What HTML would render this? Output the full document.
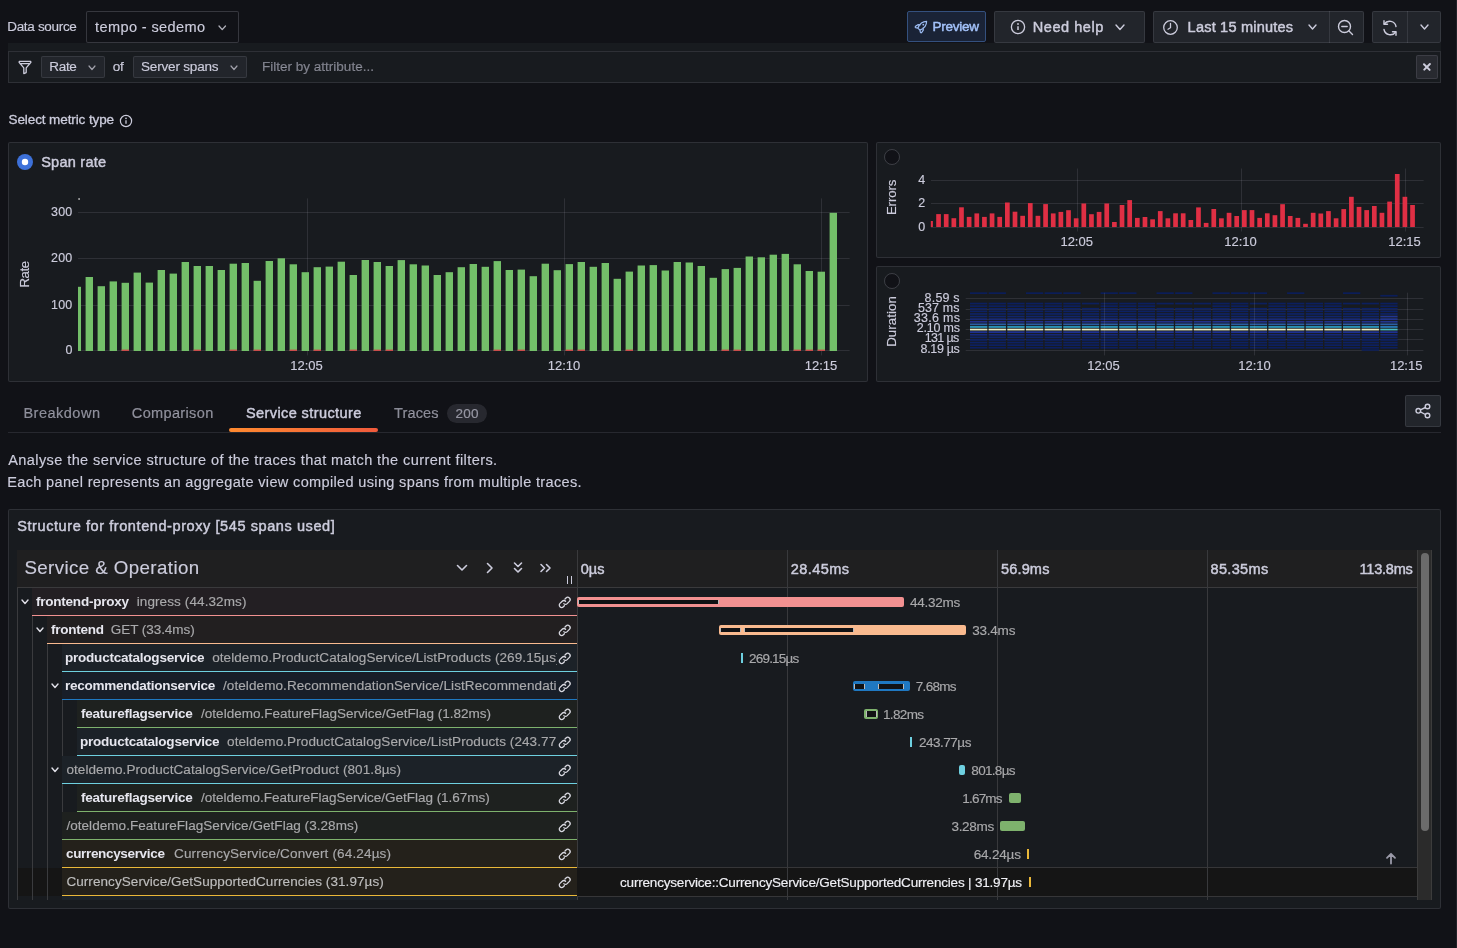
<!DOCTYPE html>
<html><head><meta charset="utf-8"><style>
html,body{margin:0;padding:0;width:1457px;height:948px;overflow:hidden;background:#111217;font-family:"Liberation Sans",sans-serif;}
div{box-sizing:border-box;}
svg{position:absolute;overflow:visible}
</style></head><body>
<div style="position:absolute;left:0;top:0;width:1457px;height:948px;will-change:transform">
<div style="position:absolute;left:7.20px;top:19.00px;font-size:13.52px;line-height:15.10px;font-weight:400;color:#ccccdc;letter-spacing:-0.320px;white-space:pre;-webkit-text-stroke:0.15px #ccccdc;">Data source</div>
<div style="position:absolute;left:86px;top:11px;width:152.5px;height:32px;border:1px solid rgba(204,204,220,0.2);border-radius:2px;background:#111217"></div>
<div style="position:absolute;left:95.00px;top:19.00px;font-size:14.56px;line-height:16.26px;font-weight:400;color:#ccccdc;letter-spacing:0.385px;white-space:pre;-webkit-text-stroke:0.15px #ccccdc;">tempo - sedemo</div>
<svg style="left:217.95px;top:25.0px" width="8.5" height="5.6" viewBox="0 0 8.5 5.6" ><path d="M1 1 L4.25 4.6 L7.5 1" fill="none" stroke="#b0b0ba" stroke-width="1.3" stroke-linecap="round" stroke-linejoin="round"/></svg>
<div style="position:absolute;left:907px;top:11px;width:79px;height:31px;border:1px solid #34507e;border-radius:2px;background:#1a2336"></div>
<svg style="left:913.3px;top:18.5px" width="16" height="16" viewBox="0 0 16 16" ><path d="M13.6 2.4 C9.6 2.4 6.6 4.9 4.9 9.1 L6.9 11.1 C11.1 9.4 13.6 6.4 13.6 2.4 Z M4.9 9.1 L2.6 8.6 C2.1 8.4 2.1 7.7 2.5 7.3 L4.9 5.7 L7.1 5.9 M6.9 11.1 L7.4 13.4 C7.6 13.9 8.3 13.9 8.7 13.5 L10.3 11.1 L10.1 8.9" fill="none" stroke="#9dbdf5" stroke-width="1.2" stroke-linejoin="round" stroke-linecap="round"/><circle cx="10.3" cy="5.7" r="0.9" fill="#9dbdf5"/></svg>
<div style="position:absolute;left:932.50px;top:19.00px;font-size:13.52px;line-height:15.10px;font-weight:400;color:#a3c2fa;letter-spacing:-0.250px;white-space:pre;-webkit-text-stroke:0.45px #a3c2fa;">Preview</div>
<div style="position:absolute;left:994px;top:11px;width:151px;height:32px;border:1px solid rgba(204,204,220,0.12);border-radius:2px;background:#22252b"></div>
<svg style="left:1010px;top:19px" width="16" height="16" viewBox="0 0 16 16" ><circle cx="8" cy="8" r="6.6" fill="none" stroke="#ccccdc" stroke-width="1.3"/><path d="M8 7.2 V11" stroke="#ccccdc" stroke-width="1.5"/><circle cx="8" cy="5" r="0.9" fill="#ccccdc"/></svg>
<div style="position:absolute;left:1032.80px;top:19.00px;font-size:14.56px;line-height:16.26px;font-weight:400;color:#ccccdc;letter-spacing:0.525px;white-space:pre;-webkit-text-stroke:0.45px #ccccdc;">Need help</div>
<svg style="left:1115.0px;top:24.25px" width="10" height="6.5" viewBox="0 0 10 6.5" ><path d="M1 1 L5.0 5.5 L9 1" fill="none" stroke="#ccccdc" stroke-width="1.4" stroke-linecap="round" stroke-linejoin="round"/></svg>
<div style="position:absolute;left:1153px;top:11px;width:211px;height:32px;border:1px solid rgba(204,204,220,0.12);border-radius:2px;background:#22252b"></div>
<div style="position:absolute;left:1328.5px;top:11px;width:1px;height:32px;background:rgba(204,204,220,0.12)"></div>
<svg style="left:1162px;top:19px" width="17" height="17" viewBox="0 0 17 17" ><circle cx="8.5" cy="8.5" r="6.8" fill="none" stroke="#ccccdc" stroke-width="1.3"/><path d="M8.5 4.5 V8.7 L6 10.2" fill="none" stroke="#ccccdc" stroke-width="1.3" stroke-linecap="round"/></svg>
<div style="position:absolute;left:1187.60px;top:19.00px;font-size:14.56px;line-height:16.26px;font-weight:400;color:#ccccdc;letter-spacing:0.193px;white-space:pre;-webkit-text-stroke:0.45px #ccccdc;">Last 15 minutes</div>
<svg style="left:1307.5px;top:24.0px" width="9" height="6" viewBox="0 0 9 6" ><path d="M1 1 L4.5 5 L8 1" fill="none" stroke="#ccccdc" stroke-width="1.4" stroke-linecap="round" stroke-linejoin="round"/></svg>
<svg style="left:1337px;top:19px" width="18" height="18" viewBox="0 0 18 18" ><circle cx="7.5" cy="7.5" r="6" fill="none" stroke="#ccccdc" stroke-width="1.4"/><path d="M4.8 7.5 H10.2 M12 12 L15.5 15.5" stroke="#ccccdc" stroke-width="1.4" stroke-linecap="round"/></svg>
<div style="position:absolute;left:1372px;top:11px;width:69px;height:32px;border:1px solid rgba(204,204,220,0.12);border-radius:2px;background:#22252b"></div>
<div style="position:absolute;left:1407px;top:11px;width:1px;height:32px;background:rgba(204,204,220,0.12)"></div>
<svg style="left:1381px;top:19px" width="18" height="18" viewBox="0 0 18 18" ><path d="M15 7.5 A6.5 6.5 0 0 0 3.3 5 M3 10.5 A6.5 6.5 0 0 0 14.7 13" fill="none" stroke="#ccccdc" stroke-width="1.4" stroke-linecap="round"/><path d="M3 1.8 V5.3 H6.5 M15 16.2 V12.7 H11.5" fill="none" stroke="#ccccdc" stroke-width="1.4" stroke-linecap="round" stroke-linejoin="round"/></svg>
<svg style="left:1419.5px;top:24.0px" width="9" height="6" viewBox="0 0 9 6" ><path d="M1 1 L4.5 5 L8 1" fill="none" stroke="#ccccdc" stroke-width="1.4" stroke-linecap="round" stroke-linejoin="round"/></svg>
<div style="position:absolute;left:8px;top:43px;width:1433px;height:40px;background:#181b1f"></div>
<div style="position:absolute;left:8px;top:51px;width:1433px;height:32px;border:1px solid rgba(204,204,220,0.12);background:#181b1f"></div>
<svg style="left:17px;top:59px" width="16" height="16" viewBox="0 0 16 16" ><path d="M2.3 2.4 H13.7 L13.9 3.3 L9.2 8.8 V13.6 L6.8 14.6 V8.8 L2.1 3.3 Z M2.6 4.6 H13.4" fill="none" stroke="#ccccdc" stroke-width="1.3" stroke-linejoin="round"/></svg>
<div style="position:absolute;left:41px;top:56px;width:64px;height:22px;border:1px solid rgba(204,204,220,0.12);border-radius:2px;background:#22252b"></div>
<div style="position:absolute;left:49.30px;top:59.00px;font-size:13.52px;line-height:15.10px;font-weight:400;color:#ccccdc;letter-spacing:-0.333px;white-space:pre;-webkit-text-stroke:0.15px #ccccdc;">Rate</div>
<svg style="left:88.2px;top:65.05px" width="8" height="5.5" viewBox="0 0 8 5.5" ><path d="M1 1 L4.0 4.5 L7 1" fill="none" stroke="#a0a0aa" stroke-width="1.2" stroke-linecap="round" stroke-linejoin="round"/></svg>
<div style="position:absolute;left:112.70px;top:59.00px;font-size:13.52px;line-height:15.10px;font-weight:400;color:#ccccdc;letter-spacing:-0.300px;white-space:pre;-webkit-text-stroke:0.15px #ccccdc;">of</div>
<div style="position:absolute;left:133px;top:56px;width:113.5px;height:22px;border:1px solid rgba(204,204,220,0.12);border-radius:2px;background:#22252b"></div>
<div style="position:absolute;left:141.00px;top:59.00px;font-size:13.52px;line-height:15.10px;font-weight:400;color:#ccccdc;letter-spacing:-0.182px;white-space:pre;-webkit-text-stroke:0.15px #ccccdc;">Server spans</div>
<svg style="left:229.5px;top:65.05px" width="8" height="5.5" viewBox="0 0 8 5.5" ><path d="M1 1 L4.0 4.5 L7 1" fill="none" stroke="#a0a0aa" stroke-width="1.2" stroke-linecap="round" stroke-linejoin="round"/></svg>
<div style="position:absolute;left:262.00px;top:59.00px;font-size:13.52px;line-height:15.10px;font-weight:400;color:rgba(204,204,220,0.55);letter-spacing:0.000px;white-space:pre;-webkit-text-stroke:0.15px rgba(204,204,220,0.55);">Filter by attribute...</div>
<div style="position:absolute;left:1416px;top:55px;width:22px;height:24px;border:1px solid rgba(204,204,220,0.12);border-radius:2px;background:#282a30"></div>
<div style="position:absolute;left:1422.2px;top:66.4px;width:9.6px;height:1.6px;background:#ccccdc;transform:rotate(45deg);border-radius:1px"></div>
<div style="position:absolute;left:1422.2px;top:66.4px;width:9.6px;height:1.6px;background:#ccccdc;transform:rotate(-45deg);border-radius:1px"></div>
<div style="position:absolute;left:8.50px;top:112.00px;font-size:13.52px;line-height:15.10px;font-weight:400;color:#ccccdc;letter-spacing:-0.106px;white-space:pre;-webkit-text-stroke:0.3px #ccccdc;">Select metric type</div>
<svg style="left:119px;top:114px" width="14" height="14" viewBox="0 0 14 14" ><circle cx="7" cy="7" r="5.6" fill="none" stroke="#ccccdc" stroke-width="1.2"/><path d="M7 6.3 V9.8" stroke="#ccccdc" stroke-width="1.3"/><circle cx="7" cy="4.4" r="0.8" fill="#ccccdc"/></svg>
<div style="position:absolute;left:8px;top:142px;width:860px;height:240px;border:1px solid rgba(204,204,220,0.12);border-radius:2px;background:#181b1f"></div>
<svg style="left:16px;top:153px" width="18" height="18" viewBox="0 0 18 18" ><circle cx="9" cy="9" r="8" fill="#3d71d9"/><circle cx="9" cy="9" r="3.2" fill="#fff"/></svg>
<div style="position:absolute;left:41.20px;top:154.00px;font-size:14.56px;line-height:16.26px;font-weight:400;color:#ccccdc;letter-spacing:0.225px;white-space:pre;-webkit-text-stroke:0.45px #ccccdc;">Span rate</div>
<svg style="left:0;top:0" width="1457" height="948"><rect x="78" y="212" width="771.6" height="1" fill="rgba(204,204,220,0.12)"/><rect x="78" y="258" width="771.6" height="1" fill="rgba(204,204,220,0.12)"/><rect x="78" y="305" width="771.6" height="1" fill="rgba(204,204,220,0.12)"/><rect x="78" y="350" width="771.6" height="1" fill="rgba(204,204,220,0.12)"/><rect x="307" y="198.4" width="1" height="157" fill="rgba(204,204,220,0.12)"/><rect x="564" y="198.4" width="1" height="157" fill="rgba(204,204,220,0.12)"/><rect x="821" y="198.4" width="1" height="157" fill="rgba(204,204,220,0.12)"/><rect x="78.3" y="198.2" width="1.6" height="1.6" fill="#bbb"/><rect x="78.00" y="286.80" width="3" height="64.20" fill="#73BF69"/><rect x="85.60" y="277.00" width="7.4" height="74.00" fill="#73BF69"/><rect x="97.60" y="286.20" width="7.4" height="64.80" fill="#73BF69"/><rect x="109.60" y="281.40" width="7.4" height="69.60" fill="#73BF69"/><rect x="121.60" y="282.80" width="7.4" height="68.20" fill="#73BF69"/><rect x="121.60" y="349.6" width="7.4" height="1.4" fill="#E02F44" opacity="0.8"/><rect x="133.60" y="272.60" width="7.4" height="78.40" fill="#73BF69"/><rect x="145.60" y="282.60" width="7.4" height="68.40" fill="#73BF69"/><rect x="157.60" y="270.00" width="7.4" height="81.00" fill="#73BF69"/><rect x="169.60" y="273.60" width="7.4" height="77.40" fill="#73BF69"/><rect x="181.60" y="262.00" width="7.4" height="89.00" fill="#73BF69"/><rect x="193.60" y="266.00" width="7.4" height="85.00" fill="#73BF69"/><rect x="193.60" y="349.6" width="7.4" height="1.4" fill="#E02F44" opacity="0.8"/><rect x="205.60" y="266.00" width="7.4" height="85.00" fill="#73BF69"/><rect x="217.60" y="270.00" width="7.4" height="81.00" fill="#73BF69"/><rect x="229.60" y="263.70" width="7.4" height="87.30" fill="#73BF69"/><rect x="229.60" y="349.6" width="7.4" height="1.4" fill="#E02F44" opacity="0.8"/><rect x="241.60" y="263.00" width="7.4" height="88.00" fill="#73BF69"/><rect x="253.60" y="280.80" width="7.4" height="70.20" fill="#73BF69"/><rect x="253.60" y="349.6" width="7.4" height="1.4" fill="#E02F44" opacity="0.8"/><rect x="265.60" y="261.00" width="7.4" height="90.00" fill="#73BF69"/><rect x="277.60" y="258.30" width="7.4" height="92.70" fill="#73BF69"/><rect x="289.60" y="264.30" width="7.4" height="86.70" fill="#73BF69"/><rect x="289.60" y="349.6" width="7.4" height="1.4" fill="#E02F44" opacity="0.8"/><rect x="301.60" y="272.20" width="7.4" height="78.80" fill="#73BF69"/><rect x="313.60" y="267.20" width="7.4" height="83.80" fill="#73BF69"/><rect x="313.60" y="349.6" width="7.4" height="1.4" fill="#E02F44" opacity="0.8"/><rect x="325.60" y="266.60" width="7.4" height="84.40" fill="#73BF69"/><rect x="337.60" y="261.70" width="7.4" height="89.30" fill="#73BF69"/><rect x="349.60" y="275.00" width="7.4" height="76.00" fill="#73BF69"/><rect x="349.60" y="349.6" width="7.4" height="1.4" fill="#E02F44" opacity="0.8"/><rect x="361.60" y="260.00" width="7.4" height="91.00" fill="#73BF69"/><rect x="373.60" y="262.00" width="7.4" height="89.00" fill="#73BF69"/><rect x="373.60" y="349.6" width="7.4" height="1.4" fill="#E02F44" opacity="0.8"/><rect x="385.60" y="266.00" width="7.4" height="85.00" fill="#73BF69"/><rect x="385.60" y="349.6" width="7.4" height="1.4" fill="#E02F44" opacity="0.8"/><rect x="397.60" y="260.10" width="7.4" height="90.90" fill="#73BF69"/><rect x="409.60" y="264.30" width="7.4" height="86.70" fill="#73BF69"/><rect x="421.60" y="265.50" width="7.4" height="85.50" fill="#73BF69"/><rect x="433.60" y="275.00" width="7.4" height="76.00" fill="#73BF69"/><rect x="445.60" y="272.20" width="7.4" height="78.80" fill="#73BF69"/><rect x="457.60" y="267.20" width="7.4" height="83.80" fill="#73BF69"/><rect x="469.60" y="264.00" width="7.4" height="87.00" fill="#73BF69"/><rect x="481.60" y="266.80" width="7.4" height="84.20" fill="#73BF69"/><rect x="493.60" y="261.10" width="7.4" height="89.90" fill="#73BF69"/><rect x="493.60" y="349.6" width="7.4" height="1.4" fill="#E02F44" opacity="0.8"/><rect x="505.60" y="270.00" width="7.4" height="81.00" fill="#73BF69"/><rect x="517.60" y="269.60" width="7.4" height="81.40" fill="#73BF69"/><rect x="517.60" y="349.6" width="7.4" height="1.4" fill="#E02F44" opacity="0.8"/><rect x="529.60" y="276.20" width="7.4" height="74.80" fill="#73BF69"/><rect x="541.60" y="263.70" width="7.4" height="87.30" fill="#73BF69"/><rect x="553.60" y="270.20" width="7.4" height="80.80" fill="#73BF69"/><rect x="565.60" y="264.10" width="7.4" height="86.90" fill="#73BF69"/><rect x="565.60" y="349.6" width="7.4" height="1.4" fill="#E02F44" opacity="0.8"/><rect x="577.60" y="262.00" width="7.4" height="89.00" fill="#73BF69"/><rect x="577.60" y="349.6" width="7.4" height="1.4" fill="#E02F44" opacity="0.8"/><rect x="589.60" y="266.80" width="7.4" height="84.20" fill="#73BF69"/><rect x="601.60" y="263.00" width="7.4" height="88.00" fill="#73BF69"/><rect x="613.60" y="278.80" width="7.4" height="72.20" fill="#73BF69"/><rect x="625.60" y="271.60" width="7.4" height="79.40" fill="#73BF69"/><rect x="625.60" y="349.6" width="7.4" height="1.4" fill="#E02F44" opacity="0.8"/><rect x="637.60" y="265.50" width="7.4" height="85.50" fill="#73BF69"/><rect x="649.60" y="265.10" width="7.4" height="85.90" fill="#73BF69"/><rect x="661.60" y="270.50" width="7.4" height="80.50" fill="#73BF69"/><rect x="673.60" y="262.00" width="7.4" height="89.00" fill="#73BF69"/><rect x="685.60" y="262.50" width="7.4" height="88.50" fill="#73BF69"/><rect x="697.60" y="266.00" width="7.4" height="85.00" fill="#73BF69"/><rect x="709.60" y="277.80" width="7.4" height="73.20" fill="#73BF69"/><rect x="721.60" y="269.10" width="7.4" height="81.90" fill="#73BF69"/><rect x="721.60" y="349.6" width="7.4" height="1.4" fill="#E02F44" opacity="0.8"/><rect x="733.60" y="267.90" width="7.4" height="83.10" fill="#73BF69"/><rect x="733.60" y="349.6" width="7.4" height="1.4" fill="#E02F44" opacity="0.8"/><rect x="745.60" y="256.50" width="7.4" height="94.50" fill="#73BF69"/><rect x="757.60" y="257.30" width="7.4" height="93.70" fill="#73BF69"/><rect x="769.60" y="254.70" width="7.4" height="96.30" fill="#73BF69"/><rect x="781.60" y="253.90" width="7.4" height="97.10" fill="#73BF69"/><rect x="793.60" y="264.30" width="7.4" height="86.70" fill="#73BF69"/><rect x="793.60" y="349.6" width="7.4" height="1.4" fill="#E02F44" opacity="0.8"/><rect x="805.60" y="271.00" width="7.4" height="80.00" fill="#73BF69"/><rect x="805.60" y="349.6" width="7.4" height="1.4" fill="#E02F44" opacity="0.8"/><rect x="817.60" y="271.70" width="7.4" height="79.30" fill="#73BF69"/><rect x="817.60" y="349.6" width="7.4" height="1.4" fill="#E02F44" opacity="0.8"/><rect x="829.60" y="212.80" width="7.4" height="138.20" fill="#73BF69"/></svg>
<div style="position:absolute;left:51.00px;top:206.00px;font-size:12.48px;line-height:13.94px;font-weight:400;color:#ccccdc;letter-spacing:0.250px;white-space:pre;-webkit-text-stroke:0.15px #ccccdc;">300</div>
<div style="position:absolute;left:51.00px;top:252.00px;font-size:12.48px;line-height:13.94px;font-weight:400;color:#ccccdc;letter-spacing:0.250px;white-space:pre;-webkit-text-stroke:0.15px #ccccdc;">200</div>
<div style="position:absolute;left:51.00px;top:299.00px;font-size:12.48px;line-height:13.94px;font-weight:400;color:#ccccdc;letter-spacing:0.250px;white-space:pre;-webkit-text-stroke:0.15px #ccccdc;">100</div>
<div style="position:absolute;left:65.50px;top:344.00px;font-size:12.48px;line-height:13.94px;font-weight:400;color:#ccccdc;letter-spacing:0.000px;white-space:pre;-webkit-text-stroke:0.15px #ccccdc;">0</div>
<div style="position:absolute;left:11.69px;top:267.37px;font-size:13.31px;line-height:14.87px;font-weight:400;color:#ccccdc;letter-spacing:-0.467px;white-space:pre;-webkit-text-stroke:0.15px #ccccdc;transform:rotate(-90deg);transform-origin:50% 50%;">Rate</div>
<div style="position:absolute;left:290.25px;top:359.00px;font-size:13.0px;line-height:14.52px;font-weight:400;color:#ccccdc;letter-spacing:-0.025px;white-space:pre;-webkit-text-stroke:0.15px #ccccdc;">12:05</div>
<div style="position:absolute;left:547.75px;top:359.00px;font-size:13.0px;line-height:14.52px;font-weight:400;color:#ccccdc;letter-spacing:-0.025px;white-space:pre;-webkit-text-stroke:0.15px #ccccdc;">12:10</div>
<div style="position:absolute;left:804.85px;top:359.00px;font-size:13.0px;line-height:14.52px;font-weight:400;color:#ccccdc;letter-spacing:-0.025px;white-space:pre;-webkit-text-stroke:0.15px #ccccdc;">12:15</div>
<div style="position:absolute;left:876px;top:142px;width:565px;height:116px;border:1px solid rgba(204,204,220,0.12);border-radius:2px;background:#181b1f"></div>
<svg style="left:883px;top:148px" width="18" height="18" viewBox="0 0 18 18" ><circle cx="9" cy="9" r="7.5" fill="#111217" stroke="rgba(204,204,220,0.22)" stroke-width="1"/></svg>
<svg style="left:0;top:0" width="1457" height="948"><rect x="931" y="180" width="492.6" height="1" fill="rgba(204,204,220,0.12)"/><rect x="931" y="203" width="492.6" height="1" fill="rgba(204,204,220,0.12)"/><rect x="931" y="227" width="492.6" height="1" fill="rgba(204,204,220,0.12)"/><rect x="1077" y="168.5" width="1" height="63" fill="rgba(204,204,220,0.12)"/><rect x="1241" y="168.5" width="1" height="63" fill="rgba(204,204,220,0.12)"/><rect x="1405" y="168.5" width="1" height="63" fill="rgba(204,204,220,0.12)"/><rect x="930.80" y="221.00" width="2.1" height="6.00" fill="#E02F44"/><rect x="936.20" y="214.10" width="4.7" height="12.90" fill="#E02F44"/><rect x="943.85" y="214.10" width="4.7" height="12.90" fill="#E02F44"/><rect x="951.49" y="218.20" width="4.7" height="8.80" fill="#E02F44"/><rect x="959.13" y="207.30" width="4.7" height="19.70" fill="#E02F44"/><rect x="966.78" y="216.90" width="4.7" height="10.10" fill="#E02F44"/><rect x="974.43" y="213.40" width="4.7" height="13.60" fill="#E02F44"/><rect x="982.07" y="216.90" width="4.7" height="10.10" fill="#E02F44"/><rect x="989.72" y="213.40" width="4.7" height="13.60" fill="#E02F44"/><rect x="997.36" y="216.90" width="4.7" height="10.10" fill="#E02F44"/><rect x="1005.00" y="202.50" width="4.7" height="24.50" fill="#E02F44"/><rect x="1012.65" y="211.70" width="4.7" height="15.30" fill="#E02F44"/><rect x="1020.30" y="215.80" width="4.7" height="11.20" fill="#E02F44"/><rect x="1027.94" y="203.10" width="4.7" height="23.90" fill="#E02F44"/><rect x="1035.59" y="215.80" width="4.7" height="11.20" fill="#E02F44"/><rect x="1043.23" y="204.10" width="4.7" height="22.90" fill="#E02F44"/><rect x="1050.88" y="213.40" width="4.7" height="13.60" fill="#E02F44"/><rect x="1058.52" y="211.90" width="4.7" height="15.10" fill="#E02F44"/><rect x="1066.16" y="210.20" width="4.7" height="16.80" fill="#E02F44"/><rect x="1073.81" y="218.30" width="4.7" height="8.70" fill="#E02F44"/><rect x="1081.45" y="203.50" width="4.7" height="23.50" fill="#E02F44"/><rect x="1089.10" y="214.20" width="4.7" height="12.80" fill="#E02F44"/><rect x="1096.75" y="211.90" width="4.7" height="15.10" fill="#E02F44"/><rect x="1104.39" y="203.50" width="4.7" height="23.50" fill="#E02F44"/><rect x="1112.04" y="222.00" width="4.7" height="5.00" fill="#E02F44"/><rect x="1119.68" y="205.00" width="4.7" height="22.00" fill="#E02F44"/><rect x="1127.33" y="200.10" width="4.7" height="26.90" fill="#E02F44"/><rect x="1134.97" y="217.90" width="4.7" height="9.10" fill="#E02F44"/><rect x="1142.62" y="217.00" width="4.7" height="10.00" fill="#E02F44"/><rect x="1150.26" y="219.30" width="4.7" height="7.70" fill="#E02F44"/><rect x="1157.90" y="211.10" width="4.7" height="15.90" fill="#E02F44"/><rect x="1165.55" y="218.30" width="4.7" height="8.70" fill="#E02F44"/><rect x="1173.19" y="213.30" width="4.7" height="13.70" fill="#E02F44"/><rect x="1180.84" y="213.30" width="4.7" height="13.70" fill="#E02F44"/><rect x="1188.49" y="220.00" width="4.7" height="7.00" fill="#E02F44"/><rect x="1196.13" y="207.40" width="4.7" height="19.60" fill="#E02F44"/><rect x="1203.78" y="222.90" width="4.7" height="4.10" fill="#E02F44"/><rect x="1211.42" y="209.00" width="4.7" height="18.00" fill="#E02F44"/><rect x="1219.07" y="218.30" width="4.7" height="8.70" fill="#E02F44"/><rect x="1226.71" y="212.80" width="4.7" height="14.20" fill="#E02F44"/><rect x="1234.36" y="216.00" width="4.7" height="11.00" fill="#E02F44"/><rect x="1242.00" y="210.10" width="4.7" height="16.90" fill="#E02F44"/><rect x="1249.64" y="210.10" width="4.7" height="16.90" fill="#E02F44"/><rect x="1257.29" y="217.90" width="4.7" height="9.10" fill="#E02F44"/><rect x="1264.93" y="213.30" width="4.7" height="13.70" fill="#E02F44"/><rect x="1272.58" y="215.20" width="4.7" height="11.80" fill="#E02F44"/><rect x="1280.22" y="204.20" width="4.7" height="22.80" fill="#E02F44"/><rect x="1287.87" y="216.00" width="4.7" height="11.00" fill="#E02F44"/><rect x="1295.52" y="217.90" width="4.7" height="9.10" fill="#E02F44"/><rect x="1303.16" y="223.80" width="4.7" height="3.20" fill="#E02F44"/><rect x="1310.81" y="212.80" width="4.7" height="14.20" fill="#E02F44"/><rect x="1318.45" y="213.50" width="4.7" height="13.50" fill="#E02F44"/><rect x="1326.10" y="211.10" width="4.7" height="15.90" fill="#E02F44"/><rect x="1333.74" y="218.30" width="4.7" height="8.70" fill="#E02F44"/><rect x="1341.38" y="209.10" width="4.7" height="17.90" fill="#E02F44"/><rect x="1349.03" y="196.80" width="4.7" height="30.20" fill="#E02F44"/><rect x="1356.67" y="206.90" width="4.7" height="20.10" fill="#E02F44"/><rect x="1364.32" y="210.10" width="4.7" height="16.90" fill="#E02F44"/><rect x="1371.97" y="206.00" width="4.7" height="21.00" fill="#E02F44"/><rect x="1379.61" y="212.80" width="4.7" height="14.20" fill="#E02F44"/><rect x="1387.26" y="201.60" width="4.7" height="25.40" fill="#E02F44"/><rect x="1394.90" y="174.00" width="4.7" height="53.00" fill="#E02F44"/><rect x="1402.55" y="196.80" width="4.7" height="30.20" fill="#E02F44"/><rect x="1410.19" y="205.00" width="4.7" height="22.00" fill="#E02F44"/></svg>
<div style="position:absolute;left:918.30px;top:174.00px;font-size:12.48px;line-height:13.94px;font-weight:400;color:#ccccdc;letter-spacing:0.000px;white-space:pre;-webkit-text-stroke:0.15px #ccccdc;">4</div>
<div style="position:absolute;left:918.30px;top:197.00px;font-size:12.48px;line-height:13.94px;font-weight:400;color:#ccccdc;letter-spacing:0.000px;white-space:pre;-webkit-text-stroke:0.15px #ccccdc;">2</div>
<div style="position:absolute;left:918.30px;top:221.00px;font-size:12.48px;line-height:13.94px;font-weight:400;color:#ccccdc;letter-spacing:0.000px;white-space:pre;-webkit-text-stroke:0.15px #ccccdc;">0</div>
<div style="position:absolute;left:874.52px;top:190.27px;font-size:13.31px;line-height:14.87px;font-weight:400;color:#ccccdc;letter-spacing:-0.140px;white-space:pre;-webkit-text-stroke:0.15px #ccccdc;transform:rotate(-90deg);transform-origin:50% 50%;">Errors</div>
<div style="position:absolute;left:1060.45px;top:235.00px;font-size:13.0px;line-height:14.52px;font-weight:400;color:#ccccdc;letter-spacing:-0.025px;white-space:pre;-webkit-text-stroke:0.15px #ccccdc;">12:05</div>
<div style="position:absolute;left:1224.35px;top:235.00px;font-size:13.0px;line-height:14.52px;font-weight:400;color:#ccccdc;letter-spacing:-0.025px;white-space:pre;-webkit-text-stroke:0.15px #ccccdc;">12:10</div>
<div style="position:absolute;left:1388.25px;top:235.00px;font-size:13.0px;line-height:14.52px;font-weight:400;color:#ccccdc;letter-spacing:-0.025px;white-space:pre;-webkit-text-stroke:0.15px #ccccdc;">12:15</div>
<div style="position:absolute;left:876px;top:266px;width:565px;height:116px;border:1px solid rgba(204,204,220,0.12);border-radius:2px;background:#181b1f"></div>
<svg style="left:883px;top:272px" width="18" height="18" viewBox="0 0 18 18" ><circle cx="9" cy="9" r="7.5" fill="#111217" stroke="rgba(204,204,220,0.22)" stroke-width="1"/></svg>
<svg style="left:0;top:0" width="1457" height="948"><rect x="965.7" y="298" width="457.7" height="1" fill="rgba(204,204,220,0.12)"/><rect x="965.7" y="309" width="457.7" height="1" fill="rgba(204,204,220,0.12)"/><rect x="965.7" y="319" width="457.7" height="1" fill="rgba(204,204,220,0.12)"/><rect x="965.7" y="329" width="457.7" height="1" fill="rgba(204,204,220,0.12)"/><rect x="965.7" y="339" width="457.7" height="1" fill="rgba(204,204,220,0.12)"/><rect x="965.7" y="350" width="457.7" height="1" fill="rgba(204,204,220,0.12)"/><rect x="970.00" y="292.30" width="17.3" height="1.7" fill="#0b1d58"/><rect x="970.00" y="302.70" width="17.3" height="1.7" fill="#0c1f5e"/><rect x="970.00" y="305.30" width="17.3" height="1.7" fill="#0c1f5e"/><rect x="970.00" y="307.90" width="17.3" height="1.7" fill="#0d2164"/><rect x="970.00" y="310.50" width="17.3" height="1.7" fill="#0d2164"/><rect x="970.00" y="313.10" width="17.3" height="1.7" fill="#0e2367"/><rect x="970.00" y="315.70" width="17.3" height="1.7" fill="#10256c"/><rect x="970.00" y="318.30" width="17.3" height="1.7" fill="#182a76"/><rect x="970.00" y="320.90" width="17.3" height="1.7" fill="#22308a"/><rect x="970.00" y="323.50" width="17.3" height="1.7" fill="#2a5fa6"/><rect x="970.00" y="326.10" width="17.3" height="1.7" fill="#2f9fc4"/><rect x="970.00" y="328.70" width="17.3" height="1.7" fill="#eef0c4"/><rect x="970.00" y="331.30" width="17.3" height="1.7" fill="#1e3190"/><rect x="970.00" y="333.90" width="17.3" height="1.7" fill="#15287a"/><rect x="970.00" y="336.50" width="17.3" height="1.7" fill="#0f2468"/><rect x="970.00" y="339.10" width="17.3" height="1.7" fill="#0d2164"/><rect x="970.00" y="341.70" width="17.3" height="1.7" fill="#0d2164"/><rect x="970.00" y="344.30" width="17.3" height="1.7" fill="#0c2062"/><rect x="970.00" y="346.90" width="17.3" height="1.7" fill="#0c1f5e"/><rect x="988.65" y="292.30" width="17.3" height="1.7" fill="#0b1d58"/><rect x="988.65" y="302.70" width="17.3" height="1.7" fill="#0c1f5e"/><rect x="988.65" y="305.30" width="17.3" height="1.7" fill="#0c1f5e"/><rect x="988.65" y="307.90" width="17.3" height="1.7" fill="#0d2164"/><rect x="988.65" y="310.50" width="17.3" height="1.7" fill="#0d2164"/><rect x="988.65" y="313.10" width="17.3" height="1.7" fill="#0e2367"/><rect x="988.65" y="315.70" width="17.3" height="1.7" fill="#10256c"/><rect x="988.65" y="318.30" width="17.3" height="1.7" fill="#182a76"/><rect x="988.65" y="320.90" width="17.3" height="1.7" fill="#22308a"/><rect x="988.65" y="323.50" width="17.3" height="1.7" fill="#2a5fa6"/><rect x="988.65" y="326.10" width="17.3" height="1.7" fill="#2f9fc4"/><rect x="988.65" y="328.70" width="17.3" height="1.7" fill="#eef0c4"/><rect x="988.65" y="331.30" width="17.3" height="1.7" fill="#1e3190"/><rect x="988.65" y="333.90" width="17.3" height="1.7" fill="#15287a"/><rect x="988.65" y="336.50" width="17.3" height="1.7" fill="#0f2468"/><rect x="988.65" y="339.10" width="17.3" height="1.7" fill="#0d2164"/><rect x="988.65" y="341.70" width="17.3" height="1.7" fill="#0d2164"/><rect x="988.65" y="344.30" width="17.3" height="1.7" fill="#0c2062"/><rect x="988.65" y="346.90" width="17.3" height="1.7" fill="#0c1f5e"/><rect x="1007.30" y="302.70" width="17.3" height="1.7" fill="#0c1f5e"/><rect x="1007.30" y="305.30" width="17.3" height="1.7" fill="#0c1f5e"/><rect x="1007.30" y="307.90" width="17.3" height="1.7" fill="#0d2164"/><rect x="1007.30" y="310.50" width="17.3" height="1.7" fill="#0d2164"/><rect x="1007.30" y="313.10" width="17.3" height="1.7" fill="#0e2367"/><rect x="1007.30" y="315.70" width="17.3" height="1.7" fill="#10256c"/><rect x="1007.30" y="318.30" width="17.3" height="1.7" fill="#182a76"/><rect x="1007.30" y="320.90" width="17.3" height="1.7" fill="#22308a"/><rect x="1007.30" y="323.50" width="17.3" height="1.7" fill="#2a5fa6"/><rect x="1007.30" y="326.10" width="17.3" height="1.7" fill="#2f9fc4"/><rect x="1007.30" y="328.70" width="17.3" height="1.7" fill="#eef0c4"/><rect x="1007.30" y="331.30" width="17.3" height="1.7" fill="#1e3190"/><rect x="1007.30" y="333.90" width="17.3" height="1.7" fill="#15287a"/><rect x="1007.30" y="336.50" width="17.3" height="1.7" fill="#0f2468"/><rect x="1007.30" y="339.10" width="17.3" height="1.7" fill="#0d2164"/><rect x="1007.30" y="341.70" width="17.3" height="1.7" fill="#0d2164"/><rect x="1007.30" y="344.30" width="17.3" height="1.7" fill="#0c2062"/><rect x="1007.30" y="346.90" width="17.3" height="1.7" fill="#0c1f5e"/><rect x="1025.95" y="292.30" width="17.3" height="1.7" fill="#0b1d58"/><rect x="1025.95" y="302.70" width="17.3" height="1.7" fill="#0c1f5e"/><rect x="1025.95" y="305.30" width="17.3" height="1.7" fill="#0c1f5e"/><rect x="1025.95" y="307.90" width="17.3" height="1.7" fill="#0d2164"/><rect x="1025.95" y="310.50" width="17.3" height="1.7" fill="#0d2164"/><rect x="1025.95" y="313.10" width="17.3" height="1.7" fill="#0e2367"/><rect x="1025.95" y="315.70" width="17.3" height="1.7" fill="#10256c"/><rect x="1025.95" y="318.30" width="17.3" height="1.7" fill="#182a76"/><rect x="1025.95" y="320.90" width="17.3" height="1.7" fill="#22308a"/><rect x="1025.95" y="323.50" width="17.3" height="1.7" fill="#2a5fa6"/><rect x="1025.95" y="326.10" width="17.3" height="1.7" fill="#2f9fc4"/><rect x="1025.95" y="328.70" width="17.3" height="1.7" fill="#eef0c4"/><rect x="1025.95" y="331.30" width="17.3" height="1.7" fill="#1e3190"/><rect x="1025.95" y="333.90" width="17.3" height="1.7" fill="#15287a"/><rect x="1025.95" y="336.50" width="17.3" height="1.7" fill="#0f2468"/><rect x="1025.95" y="339.10" width="17.3" height="1.7" fill="#0d2164"/><rect x="1025.95" y="341.70" width="17.3" height="1.7" fill="#0d2164"/><rect x="1025.95" y="344.30" width="17.3" height="1.7" fill="#0c2062"/><rect x="1025.95" y="346.90" width="17.3" height="1.7" fill="#0c1f5e"/><rect x="1044.60" y="292.30" width="17.3" height="1.7" fill="#0b1d58"/><rect x="1044.60" y="302.70" width="17.3" height="1.7" fill="#0c1f5e"/><rect x="1044.60" y="305.30" width="17.3" height="1.7" fill="#0c1f5e"/><rect x="1044.60" y="307.90" width="17.3" height="1.7" fill="#0d2164"/><rect x="1044.60" y="310.50" width="17.3" height="1.7" fill="#0d2164"/><rect x="1044.60" y="313.10" width="17.3" height="1.7" fill="#0e2367"/><rect x="1044.60" y="315.70" width="17.3" height="1.7" fill="#10256c"/><rect x="1044.60" y="318.30" width="17.3" height="1.7" fill="#182a76"/><rect x="1044.60" y="320.90" width="17.3" height="1.7" fill="#22308a"/><rect x="1044.60" y="323.50" width="17.3" height="1.7" fill="#2a5fa6"/><rect x="1044.60" y="326.10" width="17.3" height="1.7" fill="#2f9fc4"/><rect x="1044.60" y="328.70" width="17.3" height="1.7" fill="#eef0c4"/><rect x="1044.60" y="331.30" width="17.3" height="1.7" fill="#1e3190"/><rect x="1044.60" y="333.90" width="17.3" height="1.7" fill="#15287a"/><rect x="1044.60" y="336.50" width="17.3" height="1.7" fill="#0f2468"/><rect x="1044.60" y="339.10" width="17.3" height="1.7" fill="#0d2164"/><rect x="1044.60" y="341.70" width="17.3" height="1.7" fill="#0d2164"/><rect x="1044.60" y="344.30" width="17.3" height="1.7" fill="#0c2062"/><rect x="1044.60" y="346.90" width="17.3" height="1.7" fill="#0c1f5e"/><rect x="1063.25" y="292.30" width="17.3" height="1.7" fill="#0b1d58"/><rect x="1063.25" y="302.70" width="17.3" height="1.7" fill="#0c1f5e"/><rect x="1063.25" y="305.30" width="17.3" height="1.7" fill="#0c1f5e"/><rect x="1063.25" y="307.90" width="17.3" height="1.7" fill="#0d2164"/><rect x="1063.25" y="310.50" width="17.3" height="1.7" fill="#0d2164"/><rect x="1063.25" y="313.10" width="17.3" height="1.7" fill="#0e2367"/><rect x="1063.25" y="315.70" width="17.3" height="1.7" fill="#10256c"/><rect x="1063.25" y="318.30" width="17.3" height="1.7" fill="#182a76"/><rect x="1063.25" y="320.90" width="17.3" height="1.7" fill="#22308a"/><rect x="1063.25" y="323.50" width="17.3" height="1.7" fill="#2a5fa6"/><rect x="1063.25" y="326.10" width="17.3" height="1.7" fill="#2f9fc4"/><rect x="1063.25" y="328.70" width="17.3" height="1.7" fill="#eef0c4"/><rect x="1063.25" y="331.30" width="17.3" height="1.7" fill="#1e3190"/><rect x="1063.25" y="333.90" width="17.3" height="1.7" fill="#15287a"/><rect x="1063.25" y="336.50" width="17.3" height="1.7" fill="#0f2468"/><rect x="1063.25" y="339.10" width="17.3" height="1.7" fill="#0d2164"/><rect x="1063.25" y="341.70" width="17.3" height="1.7" fill="#0d2164"/><rect x="1063.25" y="344.30" width="17.3" height="1.7" fill="#0c2062"/><rect x="1063.25" y="346.90" width="17.3" height="1.7" fill="#0c1f5e"/><rect x="1081.90" y="302.70" width="17.3" height="1.7" fill="#0c1f5e"/><rect x="1081.90" y="307.90" width="17.3" height="1.7" fill="#0d2164"/><rect x="1081.90" y="310.50" width="17.3" height="1.7" fill="#0d2164"/><rect x="1081.90" y="313.10" width="17.3" height="1.7" fill="#0e2367"/><rect x="1081.90" y="315.70" width="17.3" height="1.7" fill="#10256c"/><rect x="1081.90" y="318.30" width="17.3" height="1.7" fill="#182a76"/><rect x="1081.90" y="320.90" width="17.3" height="1.7" fill="#22308a"/><rect x="1081.90" y="323.50" width="17.3" height="1.7" fill="#2a5fa6"/><rect x="1081.90" y="326.10" width="17.3" height="1.7" fill="#2f9fc4"/><rect x="1081.90" y="328.70" width="17.3" height="1.7" fill="#eef0c4"/><rect x="1081.90" y="331.30" width="17.3" height="1.7" fill="#1e3190"/><rect x="1081.90" y="333.90" width="17.3" height="1.7" fill="#15287a"/><rect x="1081.90" y="336.50" width="17.3" height="1.7" fill="#0f2468"/><rect x="1081.90" y="339.10" width="17.3" height="1.7" fill="#0d2164"/><rect x="1081.90" y="341.70" width="17.3" height="1.7" fill="#0d2164"/><rect x="1081.90" y="344.30" width="17.3" height="1.7" fill="#0c2062"/><rect x="1081.90" y="346.90" width="17.3" height="1.7" fill="#0c1f5e"/><rect x="1100.55" y="292.30" width="17.3" height="1.7" fill="#0b1d58"/><rect x="1100.55" y="302.70" width="17.3" height="1.7" fill="#0c1f5e"/><rect x="1100.55" y="305.30" width="17.3" height="1.7" fill="#0c1f5e"/><rect x="1100.55" y="307.90" width="17.3" height="1.7" fill="#0d2164"/><rect x="1100.55" y="310.50" width="17.3" height="1.7" fill="#0d2164"/><rect x="1100.55" y="313.10" width="17.3" height="1.7" fill="#0e2367"/><rect x="1100.55" y="315.70" width="17.3" height="1.7" fill="#10256c"/><rect x="1100.55" y="318.30" width="17.3" height="1.7" fill="#182a76"/><rect x="1100.55" y="320.90" width="17.3" height="1.7" fill="#22308a"/><rect x="1100.55" y="323.50" width="17.3" height="1.7" fill="#2a5fa6"/><rect x="1100.55" y="326.10" width="17.3" height="1.7" fill="#2f9fc4"/><rect x="1100.55" y="328.70" width="17.3" height="1.7" fill="#eef0c4"/><rect x="1100.55" y="331.30" width="17.3" height="1.7" fill="#1e3190"/><rect x="1100.55" y="333.90" width="17.3" height="1.7" fill="#15287a"/><rect x="1100.55" y="336.50" width="17.3" height="1.7" fill="#0f2468"/><rect x="1100.55" y="339.10" width="17.3" height="1.7" fill="#0d2164"/><rect x="1100.55" y="341.70" width="17.3" height="1.7" fill="#0d2164"/><rect x="1100.55" y="344.30" width="17.3" height="1.7" fill="#0c2062"/><rect x="1100.55" y="346.90" width="17.3" height="1.7" fill="#0c1f5e"/><rect x="1119.20" y="292.30" width="17.3" height="1.7" fill="#0b1d58"/><rect x="1119.20" y="302.70" width="17.3" height="1.7" fill="#0c1f5e"/><rect x="1119.20" y="305.30" width="17.3" height="1.7" fill="#0c1f5e"/><rect x="1119.20" y="307.90" width="17.3" height="1.7" fill="#0d2164"/><rect x="1119.20" y="310.50" width="17.3" height="1.7" fill="#0d2164"/><rect x="1119.20" y="313.10" width="17.3" height="1.7" fill="#0e2367"/><rect x="1119.20" y="315.70" width="17.3" height="1.7" fill="#10256c"/><rect x="1119.20" y="318.30" width="17.3" height="1.7" fill="#182a76"/><rect x="1119.20" y="320.90" width="17.3" height="1.7" fill="#22308a"/><rect x="1119.20" y="323.50" width="17.3" height="1.7" fill="#2a5fa6"/><rect x="1119.20" y="326.10" width="17.3" height="1.7" fill="#2f9fc4"/><rect x="1119.20" y="328.70" width="17.3" height="1.7" fill="#eef0c4"/><rect x="1119.20" y="331.30" width="17.3" height="1.7" fill="#1e3190"/><rect x="1119.20" y="333.90" width="17.3" height="1.7" fill="#15287a"/><rect x="1119.20" y="336.50" width="17.3" height="1.7" fill="#0f2468"/><rect x="1119.20" y="339.10" width="17.3" height="1.7" fill="#0d2164"/><rect x="1119.20" y="341.70" width="17.3" height="1.7" fill="#0d2164"/><rect x="1119.20" y="344.30" width="17.3" height="1.7" fill="#0c2062"/><rect x="1119.20" y="346.90" width="17.3" height="1.7" fill="#0c1f5e"/><rect x="1137.85" y="302.70" width="17.3" height="1.7" fill="#0c1f5e"/><rect x="1137.85" y="305.30" width="17.3" height="1.7" fill="#0c1f5e"/><rect x="1137.85" y="307.90" width="17.3" height="1.7" fill="#0d2164"/><rect x="1137.85" y="310.50" width="17.3" height="1.7" fill="#0d2164"/><rect x="1137.85" y="313.10" width="17.3" height="1.7" fill="#0e2367"/><rect x="1137.85" y="315.70" width="17.3" height="1.7" fill="#10256c"/><rect x="1137.85" y="318.30" width="17.3" height="1.7" fill="#182a76"/><rect x="1137.85" y="320.90" width="17.3" height="1.7" fill="#22308a"/><rect x="1137.85" y="323.50" width="17.3" height="1.7" fill="#2a5fa6"/><rect x="1137.85" y="326.10" width="17.3" height="1.7" fill="#2f9fc4"/><rect x="1137.85" y="328.70" width="17.3" height="1.7" fill="#eef0c4"/><rect x="1137.85" y="331.30" width="17.3" height="1.7" fill="#1e3190"/><rect x="1137.85" y="333.90" width="17.3" height="1.7" fill="#15287a"/><rect x="1137.85" y="336.50" width="17.3" height="1.7" fill="#0f2468"/><rect x="1137.85" y="339.10" width="17.3" height="1.7" fill="#0d2164"/><rect x="1137.85" y="341.70" width="17.3" height="1.7" fill="#0d2164"/><rect x="1137.85" y="344.30" width="17.3" height="1.7" fill="#0c2062"/><rect x="1137.85" y="346.90" width="17.3" height="1.7" fill="#0c1f5e"/><rect x="1156.50" y="292.30" width="17.3" height="1.7" fill="#0b1d58"/><rect x="1156.50" y="302.70" width="17.3" height="1.7" fill="#0c1f5e"/><rect x="1156.50" y="307.90" width="17.3" height="1.7" fill="#0d2164"/><rect x="1156.50" y="310.50" width="17.3" height="1.7" fill="#0d2164"/><rect x="1156.50" y="313.10" width="17.3" height="1.7" fill="#0e2367"/><rect x="1156.50" y="315.70" width="17.3" height="1.7" fill="#10256c"/><rect x="1156.50" y="318.30" width="17.3" height="1.7" fill="#182a76"/><rect x="1156.50" y="320.90" width="17.3" height="1.7" fill="#22308a"/><rect x="1156.50" y="323.50" width="17.3" height="1.7" fill="#2a5fa6"/><rect x="1156.50" y="326.10" width="17.3" height="1.7" fill="#2f9fc4"/><rect x="1156.50" y="328.70" width="17.3" height="1.7" fill="#eef0c4"/><rect x="1156.50" y="331.30" width="17.3" height="1.7" fill="#1e3190"/><rect x="1156.50" y="333.90" width="17.3" height="1.7" fill="#15287a"/><rect x="1156.50" y="336.50" width="17.3" height="1.7" fill="#0f2468"/><rect x="1156.50" y="339.10" width="17.3" height="1.7" fill="#0d2164"/><rect x="1156.50" y="341.70" width="17.3" height="1.7" fill="#0d2164"/><rect x="1156.50" y="344.30" width="17.3" height="1.7" fill="#0c2062"/><rect x="1156.50" y="346.90" width="17.3" height="1.7" fill="#0c1f5e"/><rect x="1175.15" y="292.30" width="17.3" height="1.7" fill="#0b1d58"/><rect x="1175.15" y="302.70" width="17.3" height="1.7" fill="#0c1f5e"/><rect x="1175.15" y="307.90" width="17.3" height="1.7" fill="#0d2164"/><rect x="1175.15" y="310.50" width="17.3" height="1.7" fill="#0d2164"/><rect x="1175.15" y="313.10" width="17.3" height="1.7" fill="#0e2367"/><rect x="1175.15" y="315.70" width="17.3" height="1.7" fill="#10256c"/><rect x="1175.15" y="318.30" width="17.3" height="1.7" fill="#182a76"/><rect x="1175.15" y="320.90" width="17.3" height="1.7" fill="#22308a"/><rect x="1175.15" y="323.50" width="17.3" height="1.7" fill="#2a5fa6"/><rect x="1175.15" y="326.10" width="17.3" height="1.7" fill="#2f9fc4"/><rect x="1175.15" y="328.70" width="17.3" height="1.7" fill="#eef0c4"/><rect x="1175.15" y="331.30" width="17.3" height="1.7" fill="#1e3190"/><rect x="1175.15" y="333.90" width="17.3" height="1.7" fill="#15287a"/><rect x="1175.15" y="336.50" width="17.3" height="1.7" fill="#0f2468"/><rect x="1175.15" y="339.10" width="17.3" height="1.7" fill="#0d2164"/><rect x="1175.15" y="341.70" width="17.3" height="1.7" fill="#0d2164"/><rect x="1175.15" y="344.30" width="17.3" height="1.7" fill="#0c2062"/><rect x="1175.15" y="346.90" width="17.3" height="1.7" fill="#0c1f5e"/><rect x="1193.80" y="302.70" width="17.3" height="1.7" fill="#0c1f5e"/><rect x="1193.80" y="307.90" width="17.3" height="1.7" fill="#0d2164"/><rect x="1193.80" y="310.50" width="17.3" height="1.7" fill="#0d2164"/><rect x="1193.80" y="313.10" width="17.3" height="1.7" fill="#0e2367"/><rect x="1193.80" y="315.70" width="17.3" height="1.7" fill="#10256c"/><rect x="1193.80" y="318.30" width="17.3" height="1.7" fill="#182a76"/><rect x="1193.80" y="320.90" width="17.3" height="1.7" fill="#22308a"/><rect x="1193.80" y="323.50" width="17.3" height="1.7" fill="#2a5fa6"/><rect x="1193.80" y="326.10" width="17.3" height="1.7" fill="#2f9fc4"/><rect x="1193.80" y="328.70" width="17.3" height="1.7" fill="#eef0c4"/><rect x="1193.80" y="331.30" width="17.3" height="1.7" fill="#1e3190"/><rect x="1193.80" y="333.90" width="17.3" height="1.7" fill="#15287a"/><rect x="1193.80" y="336.50" width="17.3" height="1.7" fill="#0f2468"/><rect x="1193.80" y="339.10" width="17.3" height="1.7" fill="#0d2164"/><rect x="1193.80" y="341.70" width="17.3" height="1.7" fill="#0d2164"/><rect x="1193.80" y="344.30" width="17.3" height="1.7" fill="#0c2062"/><rect x="1193.80" y="346.90" width="17.3" height="1.7" fill="#0c1f5e"/><rect x="1212.45" y="292.30" width="17.3" height="1.7" fill="#0b1d58"/><rect x="1212.45" y="302.70" width="17.3" height="1.7" fill="#0c1f5e"/><rect x="1212.45" y="305.30" width="17.3" height="1.7" fill="#0c1f5e"/><rect x="1212.45" y="307.90" width="17.3" height="1.7" fill="#0d2164"/><rect x="1212.45" y="310.50" width="17.3" height="1.7" fill="#0d2164"/><rect x="1212.45" y="313.10" width="17.3" height="1.7" fill="#0e2367"/><rect x="1212.45" y="315.70" width="17.3" height="1.7" fill="#10256c"/><rect x="1212.45" y="318.30" width="17.3" height="1.7" fill="#182a76"/><rect x="1212.45" y="320.90" width="17.3" height="1.7" fill="#22308a"/><rect x="1212.45" y="323.50" width="17.3" height="1.7" fill="#2a5fa6"/><rect x="1212.45" y="326.10" width="17.3" height="1.7" fill="#2f9fc4"/><rect x="1212.45" y="328.70" width="17.3" height="1.7" fill="#eef0c4"/><rect x="1212.45" y="331.30" width="17.3" height="1.7" fill="#1e3190"/><rect x="1212.45" y="333.90" width="17.3" height="1.7" fill="#15287a"/><rect x="1212.45" y="336.50" width="17.3" height="1.7" fill="#0f2468"/><rect x="1212.45" y="339.10" width="17.3" height="1.7" fill="#0d2164"/><rect x="1212.45" y="341.70" width="17.3" height="1.7" fill="#0d2164"/><rect x="1212.45" y="344.30" width="17.3" height="1.7" fill="#0c2062"/><rect x="1212.45" y="346.90" width="17.3" height="1.7" fill="#0c1f5e"/><rect x="1231.10" y="292.30" width="17.3" height="1.7" fill="#0b1d58"/><rect x="1231.10" y="302.70" width="17.3" height="1.7" fill="#0c1f5e"/><rect x="1231.10" y="305.30" width="17.3" height="1.7" fill="#0c1f5e"/><rect x="1231.10" y="307.90" width="17.3" height="1.7" fill="#0d2164"/><rect x="1231.10" y="310.50" width="17.3" height="1.7" fill="#0d2164"/><rect x="1231.10" y="313.10" width="17.3" height="1.7" fill="#0e2367"/><rect x="1231.10" y="315.70" width="17.3" height="1.7" fill="#10256c"/><rect x="1231.10" y="318.30" width="17.3" height="1.7" fill="#182a76"/><rect x="1231.10" y="320.90" width="17.3" height="1.7" fill="#22308a"/><rect x="1231.10" y="323.50" width="17.3" height="1.7" fill="#2a5fa6"/><rect x="1231.10" y="326.10" width="17.3" height="1.7" fill="#2f9fc4"/><rect x="1231.10" y="328.70" width="17.3" height="1.7" fill="#eef0c4"/><rect x="1231.10" y="331.30" width="17.3" height="1.7" fill="#1e3190"/><rect x="1231.10" y="333.90" width="17.3" height="1.7" fill="#15287a"/><rect x="1231.10" y="336.50" width="17.3" height="1.7" fill="#0f2468"/><rect x="1231.10" y="339.10" width="17.3" height="1.7" fill="#0d2164"/><rect x="1231.10" y="341.70" width="17.3" height="1.7" fill="#0d2164"/><rect x="1231.10" y="344.30" width="17.3" height="1.7" fill="#0c2062"/><rect x="1231.10" y="346.90" width="17.3" height="1.7" fill="#0c1f5e"/><rect x="1249.75" y="292.30" width="17.3" height="1.7" fill="#0b1d58"/><rect x="1249.75" y="302.70" width="17.3" height="1.7" fill="#0c1f5e"/><rect x="1249.75" y="307.90" width="17.3" height="1.7" fill="#0d2164"/><rect x="1249.75" y="310.50" width="17.3" height="1.7" fill="#0d2164"/><rect x="1249.75" y="313.10" width="17.3" height="1.7" fill="#0e2367"/><rect x="1249.75" y="315.70" width="17.3" height="1.7" fill="#10256c"/><rect x="1249.75" y="318.30" width="17.3" height="1.7" fill="#182a76"/><rect x="1249.75" y="320.90" width="17.3" height="1.7" fill="#22308a"/><rect x="1249.75" y="323.50" width="17.3" height="1.7" fill="#2a5fa6"/><rect x="1249.75" y="326.10" width="17.3" height="1.7" fill="#2f9fc4"/><rect x="1249.75" y="328.70" width="17.3" height="1.7" fill="#eef0c4"/><rect x="1249.75" y="331.30" width="17.3" height="1.7" fill="#1e3190"/><rect x="1249.75" y="333.90" width="17.3" height="1.7" fill="#15287a"/><rect x="1249.75" y="336.50" width="17.3" height="1.7" fill="#0f2468"/><rect x="1249.75" y="339.10" width="17.3" height="1.7" fill="#0d2164"/><rect x="1249.75" y="341.70" width="17.3" height="1.7" fill="#0d2164"/><rect x="1249.75" y="344.30" width="17.3" height="1.7" fill="#0c2062"/><rect x="1249.75" y="346.90" width="17.3" height="1.7" fill="#0c1f5e"/><rect x="1268.40" y="302.70" width="17.3" height="1.7" fill="#0c1f5e"/><rect x="1268.40" y="305.30" width="17.3" height="1.7" fill="#0c1f5e"/><rect x="1268.40" y="307.90" width="17.3" height="1.7" fill="#0d2164"/><rect x="1268.40" y="310.50" width="17.3" height="1.7" fill="#0d2164"/><rect x="1268.40" y="313.10" width="17.3" height="1.7" fill="#0e2367"/><rect x="1268.40" y="315.70" width="17.3" height="1.7" fill="#10256c"/><rect x="1268.40" y="318.30" width="17.3" height="1.7" fill="#182a76"/><rect x="1268.40" y="320.90" width="17.3" height="1.7" fill="#22308a"/><rect x="1268.40" y="323.50" width="17.3" height="1.7" fill="#2a5fa6"/><rect x="1268.40" y="326.10" width="17.3" height="1.7" fill="#2f9fc4"/><rect x="1268.40" y="328.70" width="17.3" height="1.7" fill="#eef0c4"/><rect x="1268.40" y="331.30" width="17.3" height="1.7" fill="#1e3190"/><rect x="1268.40" y="333.90" width="17.3" height="1.7" fill="#15287a"/><rect x="1268.40" y="336.50" width="17.3" height="1.7" fill="#0f2468"/><rect x="1268.40" y="339.10" width="17.3" height="1.7" fill="#0d2164"/><rect x="1268.40" y="341.70" width="17.3" height="1.7" fill="#0d2164"/><rect x="1268.40" y="344.30" width="17.3" height="1.7" fill="#0c2062"/><rect x="1268.40" y="346.90" width="17.3" height="1.7" fill="#0c1f5e"/><rect x="1287.05" y="292.30" width="17.3" height="1.7" fill="#0b1d58"/><rect x="1287.05" y="302.70" width="17.3" height="1.7" fill="#0c1f5e"/><rect x="1287.05" y="305.30" width="17.3" height="1.7" fill="#0c1f5e"/><rect x="1287.05" y="307.90" width="17.3" height="1.7" fill="#0d2164"/><rect x="1287.05" y="310.50" width="17.3" height="1.7" fill="#0d2164"/><rect x="1287.05" y="313.10" width="17.3" height="1.7" fill="#0e2367"/><rect x="1287.05" y="315.70" width="17.3" height="1.7" fill="#10256c"/><rect x="1287.05" y="318.30" width="17.3" height="1.7" fill="#182a76"/><rect x="1287.05" y="320.90" width="17.3" height="1.7" fill="#22308a"/><rect x="1287.05" y="323.50" width="17.3" height="1.7" fill="#2a5fa6"/><rect x="1287.05" y="326.10" width="17.3" height="1.7" fill="#2f9fc4"/><rect x="1287.05" y="328.70" width="17.3" height="1.7" fill="#eef0c4"/><rect x="1287.05" y="331.30" width="17.3" height="1.7" fill="#1e3190"/><rect x="1287.05" y="333.90" width="17.3" height="1.7" fill="#15287a"/><rect x="1287.05" y="336.50" width="17.3" height="1.7" fill="#0f2468"/><rect x="1287.05" y="339.10" width="17.3" height="1.7" fill="#0d2164"/><rect x="1287.05" y="341.70" width="17.3" height="1.7" fill="#0d2164"/><rect x="1287.05" y="344.30" width="17.3" height="1.7" fill="#0c2062"/><rect x="1287.05" y="346.90" width="17.3" height="1.7" fill="#0c1f5e"/><rect x="1305.70" y="302.70" width="17.3" height="1.7" fill="#0c1f5e"/><rect x="1305.70" y="305.30" width="17.3" height="1.7" fill="#0c1f5e"/><rect x="1305.70" y="307.90" width="17.3" height="1.7" fill="#0d2164"/><rect x="1305.70" y="310.50" width="17.3" height="1.7" fill="#0d2164"/><rect x="1305.70" y="313.10" width="17.3" height="1.7" fill="#0e2367"/><rect x="1305.70" y="315.70" width="17.3" height="1.7" fill="#10256c"/><rect x="1305.70" y="318.30" width="17.3" height="1.7" fill="#182a76"/><rect x="1305.70" y="320.90" width="17.3" height="1.7" fill="#22308a"/><rect x="1305.70" y="323.50" width="17.3" height="1.7" fill="#2a5fa6"/><rect x="1305.70" y="326.10" width="17.3" height="1.7" fill="#2f9fc4"/><rect x="1305.70" y="328.70" width="17.3" height="1.7" fill="#eef0c4"/><rect x="1305.70" y="331.30" width="17.3" height="1.7" fill="#1e3190"/><rect x="1305.70" y="333.90" width="17.3" height="1.7" fill="#15287a"/><rect x="1305.70" y="336.50" width="17.3" height="1.7" fill="#0f2468"/><rect x="1305.70" y="339.10" width="17.3" height="1.7" fill="#0d2164"/><rect x="1305.70" y="341.70" width="17.3" height="1.7" fill="#0d2164"/><rect x="1305.70" y="344.30" width="17.3" height="1.7" fill="#0c2062"/><rect x="1305.70" y="346.90" width="17.3" height="1.7" fill="#0c1f5e"/><rect x="1324.35" y="302.70" width="17.3" height="1.7" fill="#0c1f5e"/><rect x="1324.35" y="305.30" width="17.3" height="1.7" fill="#0c1f5e"/><rect x="1324.35" y="307.90" width="17.3" height="1.7" fill="#0d2164"/><rect x="1324.35" y="310.50" width="17.3" height="1.7" fill="#0d2164"/><rect x="1324.35" y="313.10" width="17.3" height="1.7" fill="#0e2367"/><rect x="1324.35" y="315.70" width="17.3" height="1.7" fill="#10256c"/><rect x="1324.35" y="318.30" width="17.3" height="1.7" fill="#182a76"/><rect x="1324.35" y="320.90" width="17.3" height="1.7" fill="#22308a"/><rect x="1324.35" y="323.50" width="17.3" height="1.7" fill="#2a5fa6"/><rect x="1324.35" y="326.10" width="17.3" height="1.7" fill="#2f9fc4"/><rect x="1324.35" y="328.70" width="17.3" height="1.7" fill="#eef0c4"/><rect x="1324.35" y="331.30" width="17.3" height="1.7" fill="#1e3190"/><rect x="1324.35" y="333.90" width="17.3" height="1.7" fill="#15287a"/><rect x="1324.35" y="336.50" width="17.3" height="1.7" fill="#0f2468"/><rect x="1324.35" y="339.10" width="17.3" height="1.7" fill="#0d2164"/><rect x="1324.35" y="341.70" width="17.3" height="1.7" fill="#0d2164"/><rect x="1324.35" y="344.30" width="17.3" height="1.7" fill="#0c2062"/><rect x="1324.35" y="346.90" width="17.3" height="1.7" fill="#0c1f5e"/><rect x="1343.00" y="292.30" width="17.3" height="1.7" fill="#0b1d58"/><rect x="1343.00" y="302.70" width="17.3" height="1.7" fill="#0c1f5e"/><rect x="1343.00" y="307.90" width="17.3" height="1.7" fill="#0d2164"/><rect x="1343.00" y="310.50" width="17.3" height="1.7" fill="#0d2164"/><rect x="1343.00" y="313.10" width="17.3" height="1.7" fill="#0e2367"/><rect x="1343.00" y="315.70" width="17.3" height="1.7" fill="#10256c"/><rect x="1343.00" y="318.30" width="17.3" height="1.7" fill="#182a76"/><rect x="1343.00" y="320.90" width="17.3" height="1.7" fill="#22308a"/><rect x="1343.00" y="323.50" width="17.3" height="1.7" fill="#2a5fa6"/><rect x="1343.00" y="326.10" width="17.3" height="1.7" fill="#2f9fc4"/><rect x="1343.00" y="328.70" width="17.3" height="1.7" fill="#eef0c4"/><rect x="1343.00" y="331.30" width="17.3" height="1.7" fill="#1e3190"/><rect x="1343.00" y="333.90" width="17.3" height="1.7" fill="#15287a"/><rect x="1343.00" y="336.50" width="17.3" height="1.7" fill="#0f2468"/><rect x="1343.00" y="339.10" width="17.3" height="1.7" fill="#0d2164"/><rect x="1343.00" y="341.70" width="17.3" height="1.7" fill="#0d2164"/><rect x="1343.00" y="344.30" width="17.3" height="1.7" fill="#0c2062"/><rect x="1343.00" y="346.90" width="17.3" height="1.7" fill="#0c1f5e"/><rect x="1361.65" y="302.70" width="17.3" height="1.7" fill="#0c1f5e"/><rect x="1361.65" y="307.90" width="17.3" height="1.7" fill="#0d2164"/><rect x="1361.65" y="310.50" width="17.3" height="1.7" fill="#0d2164"/><rect x="1361.65" y="313.10" width="17.3" height="1.7" fill="#0e2367"/><rect x="1361.65" y="315.70" width="17.3" height="1.7" fill="#10256c"/><rect x="1361.65" y="318.30" width="17.3" height="1.7" fill="#182a76"/><rect x="1361.65" y="320.90" width="17.3" height="1.7" fill="#22308a"/><rect x="1361.65" y="323.50" width="17.3" height="1.7" fill="#2a5fa6"/><rect x="1361.65" y="326.10" width="17.3" height="1.7" fill="#2f9fc4"/><rect x="1361.65" y="328.70" width="17.3" height="1.7" fill="#eef0c4"/><rect x="1361.65" y="331.30" width="17.3" height="1.7" fill="#1e3190"/><rect x="1361.65" y="333.90" width="17.3" height="1.7" fill="#15287a"/><rect x="1361.65" y="336.50" width="17.3" height="1.7" fill="#0f2468"/><rect x="1361.65" y="339.10" width="17.3" height="1.7" fill="#0d2164"/><rect x="1361.65" y="341.70" width="17.3" height="1.7" fill="#0d2164"/><rect x="1361.65" y="344.30" width="17.3" height="1.7" fill="#0c2062"/><rect x="1361.65" y="346.90" width="17.3" height="1.7" fill="#0c1f5e"/><rect x="1380.30" y="302.70" width="17.3" height="1.7" fill="#0c1f5e"/><rect x="1380.30" y="305.30" width="17.3" height="1.7" fill="#0c1f5e"/><rect x="1380.30" y="307.90" width="17.3" height="1.7" fill="#0d2164"/><rect x="1380.30" y="310.50" width="17.3" height="1.7" fill="#0d2164"/><rect x="1380.30" y="313.10" width="17.3" height="1.7" fill="#0e2367"/><rect x="1380.30" y="315.70" width="17.3" height="1.7" fill="#22368f"/><rect x="1380.30" y="318.30" width="17.3" height="1.7" fill="#22368f"/><rect x="1380.30" y="320.90" width="17.3" height="1.7" fill="#22368f"/><rect x="1380.30" y="323.50" width="17.3" height="1.7" fill="#2a5fa6"/><rect x="1380.30" y="326.10" width="17.3" height="1.7" fill="#2a7fc0"/><rect x="1380.30" y="328.70" width="17.3" height="1.7" fill="#4bbcc0"/><rect x="1380.30" y="331.30" width="17.3" height="1.7" fill="#1e3190"/><rect x="1380.30" y="333.90" width="17.3" height="1.7" fill="#15287a"/><rect x="1380.30" y="336.50" width="17.3" height="1.7" fill="#0f2468"/><rect x="1380.30" y="339.10" width="17.3" height="1.7" fill="#0d2164"/><rect x="1380.30" y="341.70" width="17.3" height="1.7" fill="#0d2164"/><rect x="1380.30" y="344.30" width="17.3" height="1.7" fill="#0c2062"/><rect x="1380.30" y="346.90" width="17.3" height="1.7" fill="#0c1f5e"/><rect x="1380.30" y="294.90" width="17.3" height="1.7" fill="#0b1d58"/><rect x="1361.65" y="349.2" width="17.3" height="1.6" fill="#0b1d58"/><rect x="1104" y="292.7" width="1" height="62.7" fill="rgba(204,204,220,0.12)"/><rect x="1254" y="292.7" width="1" height="62.7" fill="rgba(204,204,220,0.12)"/><rect x="1407" y="292.7" width="1" height="62.7" fill="rgba(204,204,220,0.12)"/></svg>
<div style="position:absolute;left:924.60px;top:292.00px;font-size:12.48px;line-height:13.94px;font-weight:400;color:#ccccdc;letter-spacing:0.200px;white-space:pre;-webkit-text-stroke:0.15px #ccccdc;">8.59 s</div>
<div style="position:absolute;left:917.90px;top:302.00px;font-size:12.48px;line-height:13.94px;font-weight:400;color:#ccccdc;letter-spacing:0.140px;white-space:pre;-webkit-text-stroke:0.15px #ccccdc;">537 ms</div>
<div style="position:absolute;left:913.80px;top:312.00px;font-size:12.48px;line-height:13.94px;font-weight:400;color:#ccccdc;letter-spacing:0.300px;white-space:pre;-webkit-text-stroke:0.15px #ccccdc;">33.6 ms</div>
<div style="position:absolute;left:916.80px;top:322.00px;font-size:12.48px;line-height:13.94px;font-weight:400;color:#ccccdc;letter-spacing:-0.200px;white-space:pre;-webkit-text-stroke:0.15px #ccccdc;">2.10 ms</div>
<div style="position:absolute;left:924.70px;top:332.00px;font-size:12.48px;line-height:13.94px;font-weight:400;color:#ccccdc;letter-spacing:-0.620px;white-space:pre;-webkit-text-stroke:0.15px #ccccdc;">131 µs</div>
<div style="position:absolute;left:920.60px;top:343.00px;font-size:12.48px;line-height:13.94px;font-weight:400;color:#ccccdc;letter-spacing:-0.333px;white-space:pre;-webkit-text-stroke:0.15px #ccccdc;">8.19 µs</div>
<div style="position:absolute;left:866.78px;top:314.27px;font-size:13.31px;line-height:14.87px;font-weight:400;color:#ccccdc;letter-spacing:0.071px;white-space:pre;-webkit-text-stroke:0.15px #ccccdc;transform:rotate(-90deg);transform-origin:50% 50%;">Duration</div>
<div style="position:absolute;left:1087.25px;top:359.00px;font-size:13.0px;line-height:14.52px;font-weight:400;color:#ccccdc;letter-spacing:-0.025px;white-space:pre;-webkit-text-stroke:0.15px #ccccdc;">12:05</div>
<div style="position:absolute;left:1238.35px;top:359.00px;font-size:13.0px;line-height:14.52px;font-weight:400;color:#ccccdc;letter-spacing:-0.025px;white-space:pre;-webkit-text-stroke:0.15px #ccccdc;">12:10</div>
<div style="position:absolute;left:1389.95px;top:359.00px;font-size:13.0px;line-height:14.52px;font-weight:400;color:#ccccdc;letter-spacing:-0.025px;white-space:pre;-webkit-text-stroke:0.15px #ccccdc;">12:15</div>
<div style="position:absolute;left:23.40px;top:405.00px;font-size:14.56px;line-height:16.26px;font-weight:400;color:rgba(204,204,220,0.65);letter-spacing:0.475px;white-space:pre;-webkit-text-stroke:0.15px rgba(204,204,220,0.65);">Breakdown</div>
<div style="position:absolute;left:131.80px;top:405.00px;font-size:14.56px;line-height:16.26px;font-weight:400;color:rgba(204,204,220,0.65);letter-spacing:0.333px;white-space:pre;-webkit-text-stroke:0.15px rgba(204,204,220,0.65);">Comparison</div>
<div style="position:absolute;left:245.90px;top:405.00px;font-size:14.56px;line-height:16.26px;font-weight:400;color:#ccccdc;letter-spacing:0.394px;white-space:pre;-webkit-text-stroke:0.45px #ccccdc;">Service structure</div>
<div style="position:absolute;left:393.90px;top:405.00px;font-size:14.56px;line-height:16.26px;font-weight:400;color:rgba(204,204,220,0.65);letter-spacing:0.160px;white-space:pre;-webkit-text-stroke:0.15px rgba(204,204,220,0.65);">Traces</div>
<div style="position:absolute;left:447px;top:404px;width:40px;height:19px;border-radius:10px;background:rgba(204,204,220,0.12)"></div>
<div style="position:absolute;left:455.40px;top:406.00px;font-size:13.52px;line-height:15.10px;font-weight:400;color:rgba(204,204,220,0.65);letter-spacing:0.300px;white-space:pre;-webkit-text-stroke:0.15px rgba(204,204,220,0.65);">200</div>
<div style="position:absolute;left:8px;top:432px;width:1433px;height:1px;background:rgba(204,204,220,0.12)"></div>
<div style="position:absolute;left:229px;top:428px;width:149px;height:4px;border-radius:2px;background:linear-gradient(90deg,#ff8a30,#f05a3c)"></div>
<div style="position:absolute;left:1405px;top:395px;width:36px;height:32px;border:1px solid rgba(204,204,220,0.12);border-radius:2px;background:#22252b"></div>
<svg style="left:1414px;top:402px" width="18" height="18" viewBox="0 0 18 18" ><circle cx="4.3" cy="8.8" r="2.3" fill="none" stroke="#ccccdc" stroke-width="1.4"/><circle cx="13.5" cy="4.5" r="2.3" fill="none" stroke="#ccccdc" stroke-width="1.4"/><circle cx="13.5" cy="13.5" r="2.3" fill="none" stroke="#ccccdc" stroke-width="1.4"/><path d="M6.4 7.8 L11.4 5.5 M6.4 9.9 L11.4 12.5" stroke="#ccccdc" stroke-width="1.4"/></svg>
<div style="position:absolute;left:8.20px;top:452.00px;font-size:14.56px;line-height:16.26px;font-weight:400;color:#ccccdc;letter-spacing:0.401px;white-space:pre;-webkit-text-stroke:0.15px #ccccdc;">Analyse the service structure of the traces that match the current filters.</div>
<div style="position:absolute;left:7.20px;top:474.00px;font-size:14.56px;line-height:16.26px;font-weight:400;color:#ccccdc;letter-spacing:0.333px;white-space:pre;-webkit-text-stroke:0.15px #ccccdc;">Each panel represents an aggregate view compiled using spans from multiple traces.</div>
<div style="position:absolute;left:8px;top:509px;width:1433px;height:400px;border:1px solid rgba(204,204,220,0.12);border-radius:2px;background:#181b1f"></div>
<div style="position:absolute;left:17.20px;top:518.00px;font-size:14.56px;line-height:16.26px;font-weight:400;color:#ccccdc;letter-spacing:0.566px;white-space:pre;-webkit-text-stroke:0.45px #ccccdc;">Structure for frontend-proxy [545 spans used]</div>
<div style="position:absolute;left:17px;top:550px;width:1400px;height:37px;background:#1f1f20"></div>
<div style="position:absolute;left:17px;top:587px;width:1400px;height:1px;background:#3a3a3c"></div>
<div style="position:absolute;left:24.40px;top:558.00px;font-size:18.72px;line-height:20.91px;font-weight:400;color:#ccccdc;letter-spacing:0.411px;white-space:pre;-webkit-text-stroke:0.15px #ccccdc;">Service &amp; Operation</div>
<svg style="left:455px;top:562px" width="14" height="12" viewBox="0 0 14 12" ><path d="M2.5 3.5 L7 8 L11.5 3.5" fill="none" stroke="#ccccdc" stroke-width="1.6" stroke-linecap="round" stroke-linejoin="round"/></svg>
<svg style="left:484px;top:561px" width="12" height="14" viewBox="0 0 12 14" ><path d="M3.5 2.5 L8 7 L3.5 11.5" fill="none" stroke="#ccccdc" stroke-width="1.6" stroke-linecap="round" stroke-linejoin="round"/></svg>
<svg style="left:511px;top:560px" width="14" height="16" viewBox="0 0 14 16" ><path d="M3.5 3 L7 6.5 L10.5 3 M3.5 8.5 L7 12 L10.5 8.5" fill="none" stroke="#ccccdc" stroke-width="1.6" stroke-linecap="round" stroke-linejoin="round"/></svg>
<svg style="left:538px;top:561px" width="16" height="14" viewBox="0 0 16 14" ><path d="M3 3.5 L6.5 7 L3 10.5 M8.5 3.5 L12 7 L8.5 10.5" fill="none" stroke="#ccccdc" stroke-width="1.6" stroke-linecap="round" stroke-linejoin="round"/></svg>
<div style="position:absolute;left:567px;top:575.5px;width:1px;height:8.5px;background:#ccccdc"></div>
<div style="position:absolute;left:571px;top:575.5px;width:1px;height:8.5px;background:#ccccdc"></div>
<div style="position:absolute;left:577px;top:550px;width:1px;height:350px;background:#3a3a3c"></div>
<div style="position:absolute;left:1417px;top:550px;width:15px;height:350px;background:#2b2b2b;border-left:1px solid #3c3c3c;border-right:1px solid #3c3c3c"></div>
<div style="position:absolute;left:1421px;top:553px;width:8px;height:278px;background:#6b6b6b;border-radius:4px"></div>
<div style="position:absolute;left:580.80px;top:561.00px;font-size:14.56px;line-height:16.26px;font-weight:400;color:#ccccdc;letter-spacing:-0.050px;white-space:pre;-webkit-text-stroke:0.45px #ccccdc;">0µs</div>
<div style="position:absolute;left:790.80px;top:561.00px;font-size:14.56px;line-height:16.26px;font-weight:400;color:#ccccdc;letter-spacing:0.417px;white-space:pre;-webkit-text-stroke:0.45px #ccccdc;">28.45ms</div>
<div style="position:absolute;left:1001.00px;top:561.00px;font-size:14.56px;line-height:16.26px;font-weight:400;color:#ccccdc;letter-spacing:0.140px;white-space:pre;-webkit-text-stroke:0.45px #ccccdc;">56.9ms</div>
<div style="position:absolute;left:1210.60px;top:561.00px;font-size:14.56px;line-height:16.26px;font-weight:400;color:#ccccdc;letter-spacing:0.300px;white-space:pre;-webkit-text-stroke:0.45px #ccccdc;">85.35ms</div>
<div style="position:absolute;left:1359.60px;top:561.00px;font-size:14.56px;line-height:16.26px;font-weight:400;color:#ccccdc;letter-spacing:-0.250px;white-space:pre;-webkit-text-stroke:0.45px #ccccdc;">113.8ms</div>
<div style="position:absolute;left:17px;top:867.5px;width:1400px;height:28px;background:#151515"></div>
<div style="position:absolute;left:577px;top:867px;width:840px;height:1px;background:#363638"></div>
<div style="position:absolute;left:577px;top:895.5px;width:840px;height:1px;background:#363638"></div>
<div style="position:absolute;left:787.2px;top:550px;width:1px;height:350px;background:#38393c"></div>
<div style="position:absolute;left:996.9px;top:550px;width:1px;height:350px;background:#38393c"></div>
<div style="position:absolute;left:1206.6px;top:550px;width:1px;height:350px;background:#38393c"></div>
<div style="position:absolute;left:62px;top:895.5px;width:515px;height:4.5px;background:#1c2329"></div>
<div style="position:absolute;left:17px;top:895.5px;width:1px;height:4.5px;background:#3a3b3e"></div>
<div style="position:absolute;left:32px;top:895.5px;width:1px;height:4.5px;background:#3a3b3e"></div>
<div style="position:absolute;left:47px;top:895.5px;width:1px;height:4.5px;background:#3a3b3e"></div>
<div style="position:absolute;left:32px;top:587.5px;width:545px;height:28px;background:#231f23"></div>
<div style="position:absolute;left:32px;top:614.5px;width:545px;height:1px;background:#F29191"></div>
<div style="position:absolute;left:17px;top:587.5px;width:1px;height:28px;background:#3a3b3e"></div>
<svg style="left:21.0px;top:599.05px" width="8" height="5.5" viewBox="0 0 8 5.5" ><path d="M1 1 L4.0 4.5 L7 1" fill="none" stroke="#e0e0e8" stroke-width="1.4" stroke-linecap="round" stroke-linejoin="round"/></svg>
<div style="position:absolute;left:36.00px;top:594.00px;font-size:13.52px;line-height:15.10px;font-weight:700;color:#e6e6ee;letter-spacing:-0.238px;white-space:pre;-webkit-text-stroke:0px #e6e6ee;">frontend-proxy</div>
<div style="position:absolute;left:32px;top:587.5px;width:524.6px;height:28px;overflow:hidden">
<div style="position:absolute;left:104.70px;top:6.00px;font-size:13.52px;line-height:15.10px;font-weight:400;color:#a9a9ab;letter-spacing:0.100px;white-space:pre;-webkit-text-stroke:0.15px #a9a9ab;">ingress (44.32ms)</div>
</div>
<svg style="left:557px;top:594.5px" width="16" height="14" viewBox="0 0 16 14" ><path d="M6.8 8.6 A2.4 2.4 0 0 0 10.2 8.6 L12.4 6.4 A2.4 2.4 0 0 0 9 3 L8 4 M8.6 6.2 A2.4 2.4 0 0 0 5.2 6.2 L3 8.4 A2.4 2.4 0 0 0 6.4 11.8 L7.4 10.8" fill="none" stroke="#d8d8e0" stroke-width="1.3" stroke-linecap="round"/></svg>
<div style="position:absolute;left:47px;top:615.5px;width:530px;height:28px;background:#221f20"></div>
<div style="position:absolute;left:47px;top:642.5px;width:530px;height:1px;background:#F9BA8F"></div>
<div style="position:absolute;left:17px;top:615.5px;width:1px;height:28px;background:#3a3b3e"></div>
<div style="position:absolute;left:32px;top:615.5px;width:1px;height:28px;background:#3a3b3e"></div>
<svg style="left:36.0px;top:627.05px" width="8" height="5.5" viewBox="0 0 8 5.5" ><path d="M1 1 L4.0 4.5 L7 1" fill="none" stroke="#e0e0e8" stroke-width="1.4" stroke-linecap="round" stroke-linejoin="round"/></svg>
<div style="position:absolute;left:51.00px;top:622.00px;font-size:13.52px;line-height:15.10px;font-weight:700;color:#e6e6ee;letter-spacing:-0.257px;white-space:pre;-webkit-text-stroke:0px #e6e6ee;">frontend</div>
<div style="position:absolute;left:47px;top:615.5px;width:509.6px;height:28px;overflow:hidden">
<div style="position:absolute;left:63.80px;top:6.00px;font-size:13.52px;line-height:15.10px;font-weight:400;color:#a9a9ab;letter-spacing:-0.064px;white-space:pre;-webkit-text-stroke:0.15px #a9a9ab;">GET (33.4ms)</div>
</div>
<svg style="left:557px;top:622.5px" width="16" height="14" viewBox="0 0 16 14" ><path d="M6.8 8.6 A2.4 2.4 0 0 0 10.2 8.6 L12.4 6.4 A2.4 2.4 0 0 0 9 3 L8 4 M8.6 6.2 A2.4 2.4 0 0 0 5.2 6.2 L3 8.4 A2.4 2.4 0 0 0 6.4 11.8 L7.4 10.8" fill="none" stroke="#d8d8e0" stroke-width="1.3" stroke-linecap="round"/></svg>
<div style="position:absolute;left:62px;top:643.5px;width:515px;height:28px;background:#1c2228"></div>
<div style="position:absolute;left:62px;top:670.5px;width:515px;height:1px;background:#6ED0E0"></div>
<div style="position:absolute;left:17px;top:643.5px;width:1px;height:28px;background:#3a3b3e"></div>
<div style="position:absolute;left:32px;top:643.5px;width:1px;height:28px;background:#3a3b3e"></div>
<div style="position:absolute;left:47px;top:643.5px;width:1px;height:28px;background:#3a3b3e"></div>
<div style="position:absolute;left:65.00px;top:650.00px;font-size:13.52px;line-height:15.10px;font-weight:700;color:#e6e6ee;letter-spacing:-0.230px;white-space:pre;-webkit-text-stroke:0px #e6e6ee;">productcatalogservice</div>
<div style="position:absolute;left:62px;top:643.5px;width:494.6px;height:28px;overflow:hidden">
<div style="position:absolute;left:150.20px;top:6.00px;font-size:13.52px;line-height:15.10px;font-weight:400;color:#a9a9ab;letter-spacing:0.075px;white-space:pre;-webkit-text-stroke:0.15px #a9a9ab;">oteldemo.ProductCatalogService/ListProducts (269.15µs)</div>
</div>
<svg style="left:557px;top:650.5px" width="16" height="14" viewBox="0 0 16 14" ><path d="M6.8 8.6 A2.4 2.4 0 0 0 10.2 8.6 L12.4 6.4 A2.4 2.4 0 0 0 9 3 L8 4 M8.6 6.2 A2.4 2.4 0 0 0 5.2 6.2 L3 8.4 A2.4 2.4 0 0 0 6.4 11.8 L7.4 10.8" fill="none" stroke="#d8d8e0" stroke-width="1.3" stroke-linecap="round"/></svg>
<div style="position:absolute;left:62px;top:671.5px;width:515px;height:28px;background:#181e28"></div>
<div style="position:absolute;left:62px;top:698.5px;width:515px;height:1px;background:#1F78C1"></div>
<div style="position:absolute;left:17px;top:671.5px;width:1px;height:28px;background:#3a3b3e"></div>
<div style="position:absolute;left:32px;top:671.5px;width:1px;height:28px;background:#3a3b3e"></div>
<div style="position:absolute;left:47px;top:671.5px;width:1px;height:28px;background:#3a3b3e"></div>
<svg style="left:51.0px;top:683.05px" width="8" height="5.5" viewBox="0 0 8 5.5" ><path d="M1 1 L4.0 4.5 L7 1" fill="none" stroke="#e0e0e8" stroke-width="1.4" stroke-linecap="round" stroke-linejoin="round"/></svg>
<div style="position:absolute;left:65.00px;top:678.00px;font-size:13.52px;line-height:15.10px;font-weight:700;color:#e6e6ee;letter-spacing:-0.265px;white-space:pre;-webkit-text-stroke:0px #e6e6ee;">recommendationservice</div>
<div style="position:absolute;left:62px;top:671.5px;width:494.6px;height:28px;overflow:hidden">
<div style="position:absolute;left:161.00px;top:6.00px;font-size:13.52px;line-height:15.10px;font-weight:400;color:#a9a9ab;letter-spacing:0.081px;white-space:pre;-webkit-text-stroke:0.15px #a9a9ab;">/oteldemo.RecommendationService/ListRecommendations (7.68ms)</div>
</div>
<svg style="left:557px;top:678.5px" width="16" height="14" viewBox="0 0 16 14" ><path d="M6.8 8.6 A2.4 2.4 0 0 0 10.2 8.6 L12.4 6.4 A2.4 2.4 0 0 0 9 3 L8 4 M8.6 6.2 A2.4 2.4 0 0 0 5.2 6.2 L3 8.4 A2.4 2.4 0 0 0 6.4 11.8 L7.4 10.8" fill="none" stroke="#d8d8e0" stroke-width="1.3" stroke-linecap="round"/></svg>
<div style="position:absolute;left:77px;top:699.5px;width:500px;height:28px;background:#1e211f"></div>
<div style="position:absolute;left:77px;top:726.5px;width:500px;height:1px;background:#7EB26D"></div>
<div style="position:absolute;left:17px;top:699.5px;width:1px;height:28px;background:#3a3b3e"></div>
<div style="position:absolute;left:32px;top:699.5px;width:1px;height:28px;background:#3a3b3e"></div>
<div style="position:absolute;left:47px;top:699.5px;width:1px;height:28px;background:#3a3b3e"></div>
<div style="position:absolute;left:62px;top:699.5px;width:1px;height:28px;background:#3a3b3e"></div>
<div style="position:absolute;left:81.00px;top:706.00px;font-size:13.52px;line-height:15.10px;font-weight:700;color:#e6e6ee;letter-spacing:-0.235px;white-space:pre;-webkit-text-stroke:0px #e6e6ee;">featureflagservice</div>
<div style="position:absolute;left:77px;top:699.5px;width:479.6px;height:28px;overflow:hidden">
<div style="position:absolute;left:124.10px;top:6.00px;font-size:13.52px;line-height:15.10px;font-weight:400;color:#a9a9ab;letter-spacing:-0.002px;white-space:pre;-webkit-text-stroke:0.15px #a9a9ab;">/oteldemo.FeatureFlagService/GetFlag (1.82ms)</div>
</div>
<svg style="left:557px;top:706.5px" width="16" height="14" viewBox="0 0 16 14" ><path d="M6.8 8.6 A2.4 2.4 0 0 0 10.2 8.6 L12.4 6.4 A2.4 2.4 0 0 0 9 3 L8 4 M8.6 6.2 A2.4 2.4 0 0 0 5.2 6.2 L3 8.4 A2.4 2.4 0 0 0 6.4 11.8 L7.4 10.8" fill="none" stroke="#d8d8e0" stroke-width="1.3" stroke-linecap="round"/></svg>
<div style="position:absolute;left:77px;top:727.5px;width:500px;height:28px;background:#1c2228"></div>
<div style="position:absolute;left:77px;top:754.5px;width:500px;height:1px;background:#6ED0E0"></div>
<div style="position:absolute;left:17px;top:727.5px;width:1px;height:28px;background:#3a3b3e"></div>
<div style="position:absolute;left:32px;top:727.5px;width:1px;height:28px;background:#3a3b3e"></div>
<div style="position:absolute;left:47px;top:727.5px;width:1px;height:28px;background:#3a3b3e"></div>
<div style="position:absolute;left:62px;top:727.5px;width:1px;height:28px;background:#3a3b3e"></div>
<div style="position:absolute;left:80.00px;top:734.00px;font-size:13.52px;line-height:15.10px;font-weight:700;color:#e6e6ee;letter-spacing:-0.230px;white-space:pre;-webkit-text-stroke:0px #e6e6ee;">productcatalogservice</div>
<div style="position:absolute;left:77px;top:727.5px;width:479.6px;height:28px;overflow:hidden">
<div style="position:absolute;left:150.10px;top:6.00px;font-size:13.52px;line-height:15.10px;font-weight:400;color:#a9a9ab;letter-spacing:0.075px;white-space:pre;-webkit-text-stroke:0.15px #a9a9ab;">oteldemo.ProductCatalogService/ListProducts (243.77µs)</div>
</div>
<svg style="left:557px;top:734.5px" width="16" height="14" viewBox="0 0 16 14" ><path d="M6.8 8.6 A2.4 2.4 0 0 0 10.2 8.6 L12.4 6.4 A2.4 2.4 0 0 0 9 3 L8 4 M8.6 6.2 A2.4 2.4 0 0 0 5.2 6.2 L3 8.4 A2.4 2.4 0 0 0 6.4 11.8 L7.4 10.8" fill="none" stroke="#d8d8e0" stroke-width="1.3" stroke-linecap="round"/></svg>
<div style="position:absolute;left:62px;top:755.5px;width:515px;height:28px;background:#1c2228"></div>
<div style="position:absolute;left:62px;top:782.5px;width:515px;height:1px;background:#6ED0E0"></div>
<div style="position:absolute;left:17px;top:755.5px;width:1px;height:28px;background:#3a3b3e"></div>
<div style="position:absolute;left:32px;top:755.5px;width:1px;height:28px;background:#3a3b3e"></div>
<div style="position:absolute;left:47px;top:755.5px;width:1px;height:28px;background:#3a3b3e"></div>
<svg style="left:51.0px;top:767.05px" width="8" height="5.5" viewBox="0 0 8 5.5" ><path d="M1 1 L4.0 4.5 L7 1" fill="none" stroke="#e0e0e8" stroke-width="1.4" stroke-linecap="round" stroke-linejoin="round"/></svg>
<div style="position:absolute;left:62px;top:755.5px;width:494.6px;height:28px;overflow:hidden">
<div style="position:absolute;left:4.40px;top:6.00px;font-size:13.52px;line-height:15.10px;font-weight:400;color:#a9a9ab;letter-spacing:0.074px;white-space:pre;-webkit-text-stroke:0.15px #a9a9ab;">oteldemo.ProductCatalogService/GetProduct (801.8µs)</div>
</div>
<svg style="left:557px;top:762.5px" width="16" height="14" viewBox="0 0 16 14" ><path d="M6.8 8.6 A2.4 2.4 0 0 0 10.2 8.6 L12.4 6.4 A2.4 2.4 0 0 0 9 3 L8 4 M8.6 6.2 A2.4 2.4 0 0 0 5.2 6.2 L3 8.4 A2.4 2.4 0 0 0 6.4 11.8 L7.4 10.8" fill="none" stroke="#d8d8e0" stroke-width="1.3" stroke-linecap="round"/></svg>
<div style="position:absolute;left:77px;top:783.5px;width:500px;height:28px;background:#1e211f"></div>
<div style="position:absolute;left:77px;top:810.5px;width:500px;height:1px;background:#7EB26D"></div>
<div style="position:absolute;left:17px;top:783.5px;width:1px;height:28px;background:#3a3b3e"></div>
<div style="position:absolute;left:32px;top:783.5px;width:1px;height:28px;background:#3a3b3e"></div>
<div style="position:absolute;left:47px;top:783.5px;width:1px;height:28px;background:#3a3b3e"></div>
<div style="position:absolute;left:62px;top:783.5px;width:1px;height:28px;background:#3a3b3e"></div>
<div style="position:absolute;left:81.00px;top:790.00px;font-size:13.52px;line-height:15.10px;font-weight:700;color:#e6e6ee;letter-spacing:-0.235px;white-space:pre;-webkit-text-stroke:0px #e6e6ee;">featureflagservice</div>
<div style="position:absolute;left:77px;top:783.5px;width:479.6px;height:28px;overflow:hidden">
<div style="position:absolute;left:124.00px;top:6.00px;font-size:13.52px;line-height:15.10px;font-weight:400;color:#a9a9ab;letter-spacing:-0.027px;white-space:pre;-webkit-text-stroke:0.15px #a9a9ab;">/oteldemo.FeatureFlagService/GetFlag (1.67ms)</div>
</div>
<svg style="left:557px;top:790.5px" width="16" height="14" viewBox="0 0 16 14" ><path d="M6.8 8.6 A2.4 2.4 0 0 0 10.2 8.6 L12.4 6.4 A2.4 2.4 0 0 0 9 3 L8 4 M8.6 6.2 A2.4 2.4 0 0 0 5.2 6.2 L3 8.4 A2.4 2.4 0 0 0 6.4 11.8 L7.4 10.8" fill="none" stroke="#d8d8e0" stroke-width="1.3" stroke-linecap="round"/></svg>
<div style="position:absolute;left:62px;top:811.5px;width:515px;height:28px;background:#1e211f"></div>
<div style="position:absolute;left:62px;top:838.5px;width:515px;height:1px;background:#7EB26D"></div>
<div style="position:absolute;left:17px;top:811.5px;width:1px;height:28px;background:#3a3b3e"></div>
<div style="position:absolute;left:32px;top:811.5px;width:1px;height:28px;background:#3a3b3e"></div>
<div style="position:absolute;left:47px;top:811.5px;width:1px;height:28px;background:#3a3b3e"></div>
<div style="position:absolute;left:62px;top:811.5px;width:494.6px;height:28px;overflow:hidden">
<div style="position:absolute;left:4.40px;top:6.00px;font-size:13.52px;line-height:15.10px;font-weight:400;color:#a9a9ab;letter-spacing:0.043px;white-space:pre;-webkit-text-stroke:0.15px #a9a9ab;">/oteldemo.FeatureFlagService/GetFlag (3.28ms)</div>
</div>
<svg style="left:557px;top:818.5px" width="16" height="14" viewBox="0 0 16 14" ><path d="M6.8 8.6 A2.4 2.4 0 0 0 10.2 8.6 L12.4 6.4 A2.4 2.4 0 0 0 9 3 L8 4 M8.6 6.2 A2.4 2.4 0 0 0 5.2 6.2 L3 8.4 A2.4 2.4 0 0 0 6.4 11.8 L7.4 10.8" fill="none" stroke="#d8d8e0" stroke-width="1.3" stroke-linecap="round"/></svg>
<div style="position:absolute;left:62px;top:839.5px;width:515px;height:28px;background:#24211b"></div>
<div style="position:absolute;left:62px;top:866.5px;width:515px;height:1px;background:#EAB839"></div>
<div style="position:absolute;left:17px;top:839.5px;width:1px;height:28px;background:#3a3b3e"></div>
<div style="position:absolute;left:32px;top:839.5px;width:1px;height:28px;background:#3a3b3e"></div>
<div style="position:absolute;left:47px;top:839.5px;width:1px;height:28px;background:#3a3b3e"></div>
<div style="position:absolute;left:66.00px;top:846.00px;font-size:13.52px;line-height:15.10px;font-weight:700;color:#e6e6ee;letter-spacing:-0.343px;white-space:pre;-webkit-text-stroke:0px #e6e6ee;">currencyservice</div>
<div style="position:absolute;left:62px;top:839.5px;width:494.6px;height:28px;overflow:hidden">
<div style="position:absolute;left:112.00px;top:6.00px;font-size:13.52px;line-height:15.10px;font-weight:400;color:#a9a9ab;letter-spacing:0.153px;white-space:pre;-webkit-text-stroke:0.15px #a9a9ab;">CurrencyService/Convert (64.24µs)</div>
</div>
<svg style="left:557px;top:846.5px" width="16" height="14" viewBox="0 0 16 14" ><path d="M6.8 8.6 A2.4 2.4 0 0 0 10.2 8.6 L12.4 6.4 A2.4 2.4 0 0 0 9 3 L8 4 M8.6 6.2 A2.4 2.4 0 0 0 5.2 6.2 L3 8.4 A2.4 2.4 0 0 0 6.4 11.8 L7.4 10.8" fill="none" stroke="#d8d8e0" stroke-width="1.3" stroke-linecap="round"/></svg>
<div style="position:absolute;left:62px;top:867.5px;width:515px;height:28px;background:#24211b"></div>
<div style="position:absolute;left:62px;top:894.5px;width:515px;height:1px;background:#EAB839"></div>
<div style="position:absolute;left:17px;top:867.5px;width:1px;height:28px;background:#3a3b3e"></div>
<div style="position:absolute;left:32px;top:867.5px;width:1px;height:28px;background:#3a3b3e"></div>
<div style="position:absolute;left:47px;top:867.5px;width:1px;height:28px;background:#3a3b3e"></div>
<div style="position:absolute;left:62px;top:867.5px;width:494.6px;height:28px;overflow:hidden">
<div style="position:absolute;left:4.40px;top:6.00px;font-size:13.52px;line-height:15.10px;font-weight:400;color:#bebebe;letter-spacing:0.066px;white-space:pre;-webkit-text-stroke:0.15px #bebebe;">CurrencyService/GetSupportedCurrencies (31.97µs)</div>
</div>
<svg style="left:557px;top:874.5px" width="16" height="14" viewBox="0 0 16 14" ><path d="M6.8 8.6 A2.4 2.4 0 0 0 10.2 8.6 L12.4 6.4 A2.4 2.4 0 0 0 9 3 L8 4 M8.6 6.2 A2.4 2.4 0 0 0 5.2 6.2 L3 8.4 A2.4 2.4 0 0 0 6.4 11.8 L7.4 10.8" fill="none" stroke="#d8d8e0" stroke-width="1.3" stroke-linecap="round"/></svg>
<div style="position:absolute;left:577.1px;top:597.0px;width:326.69999999999993px;height:10px;background:#F29191;border-radius:2px"></div>
<div style="position:absolute;left:577.6px;top:600.2px;width:141.69999999999993px;height:4px;background:#111214;border-left:1px solid #bbb;border-right:1px solid #bbb"></div>
<div style="position:absolute;left:910.00px;top:595.00px;font-size:13.52px;line-height:15.10px;font-weight:400;color:#a9a9ab;letter-spacing:-0.267px;white-space:pre;-webkit-text-stroke:0.15px #a9a9ab;">44.32ms</div>
<div style="position:absolute;left:718.9px;top:625.0px;width:247.10000000000002px;height:10px;background:#F9BA8F;border-radius:2px"></div>
<div style="position:absolute;left:720px;top:628.2px;width:20.600000000000023px;height:4px;background:#111214;border-left:1px solid #bbb;border-right:1px solid #bbb"></div>
<div style="position:absolute;left:743.6px;top:628.2px;width:110.29999999999995px;height:4px;background:#111214;border-left:1px solid #bbb;border-right:1px solid #bbb"></div>
<div style="position:absolute;left:972.20px;top:623.00px;font-size:13.52px;line-height:15.10px;font-weight:400;color:#a9a9ab;letter-spacing:-0.220px;white-space:pre;-webkit-text-stroke:0.15px #a9a9ab;">33.4ms</div>
<div style="position:absolute;left:741.2px;top:653.0px;width:2.0px;height:10px;background:#6ED0E0;border-radius:0px"></div>
<div style="position:absolute;left:749.00px;top:651.00px;font-size:13.52px;line-height:15.10px;font-weight:400;color:#a9a9ab;letter-spacing:-0.800px;white-space:pre;-webkit-text-stroke:0.15px #a9a9ab;">269.15µs</div>
<div style="position:absolute;left:852.8px;top:681.0px;width:57.200000000000045px;height:10px;background:#1F78C1;border-radius:2px"></div>
<div style="position:absolute;left:854.4px;top:684.1px;width:10.800000000000068px;height:4.5px;background:#111214;border-left:1px solid #bbb;border-right:1px solid #bbb"></div>
<div style="position:absolute;left:878.3px;top:684.1px;width:26.0px;height:4.5px;background:#111214;border-left:1px solid #bbb;border-right:1px solid #bbb"></div>
<div style="position:absolute;left:915.80px;top:679.00px;font-size:13.52px;line-height:15.10px;font-weight:400;color:#a9a9ab;letter-spacing:-0.700px;white-space:pre;-webkit-text-stroke:0.15px #a9a9ab;">7.68ms</div>
<div style="position:absolute;left:863.8px;top:709.0px;width:14.5px;height:10px;background:#7EB26D;border-radius:2px"></div>
<div style="position:absolute;left:865.5px;top:711.2px;width:11.299999999999955px;height:5.5px;background:#111214;border-left:1px solid #bbb;border-right:1px solid #bbb"></div>
<div style="position:absolute;left:882.90px;top:707.00px;font-size:13.52px;line-height:15.10px;font-weight:400;color:#a9a9ab;letter-spacing:-0.640px;white-space:pre;-webkit-text-stroke:0.15px #a9a9ab;">1.82ms</div>
<div style="position:absolute;left:909.9px;top:737.0px;width:2.1000000000000227px;height:10px;background:#6ED0E0;border-radius:0px"></div>
<div style="position:absolute;left:919.00px;top:735.00px;font-size:13.52px;line-height:15.10px;font-weight:400;color:#a9a9ab;letter-spacing:-0.500px;white-space:pre;-webkit-text-stroke:0.15px #a9a9ab;">243.77µs</div>
<div style="position:absolute;left:959px;top:765.0px;width:6px;height:10px;background:#6ED0E0;border-radius:2px"></div>
<div style="position:absolute;left:971.30px;top:763.00px;font-size:13.52px;line-height:15.10px;font-weight:400;color:#a9a9ab;letter-spacing:-0.683px;white-space:pre;-webkit-text-stroke:0.15px #a9a9ab;">801.8µs</div>
<div style="position:absolute;left:1008.7px;top:793.0px;width:12.299999999999955px;height:10px;background:#7EB26D;border-radius:2px"></div>
<div style="position:absolute;left:962.30px;top:791.00px;font-size:13.52px;line-height:15.10px;font-weight:400;color:#a9a9ab;letter-spacing:-0.820px;white-space:pre;-webkit-text-stroke:0.15px #a9a9ab;">1.67ms</div>
<div style="position:absolute;left:1000px;top:821.0px;width:25px;height:10px;background:#7EB26D;border-radius:2px"></div>
<div style="position:absolute;left:951.40px;top:819.00px;font-size:13.52px;line-height:15.10px;font-weight:400;color:#a9a9ab;letter-spacing:-0.280px;white-space:pre;-webkit-text-stroke:0.15px #a9a9ab;">3.28ms</div>
<div style="position:absolute;left:1027px;top:849.0px;width:2.2999999999999545px;height:10px;background:#EAB839;border-radius:0px"></div>
<div style="position:absolute;left:973.70px;top:847.00px;font-size:13.52px;line-height:15.10px;font-weight:400;color:#a9a9ab;letter-spacing:-0.183px;white-space:pre;-webkit-text-stroke:0.15px #a9a9ab;">64.24µs</div>
<div style="position:absolute;left:1028.8px;top:877.0px;width:2.6000000000001364px;height:10px;background:#EAB839;border-radius:0px"></div>
<div style="position:absolute;left:620.00px;top:875.00px;font-size:13.52px;line-height:15.10px;font-weight:400;color:#f0f0f5;letter-spacing:-0.197px;white-space:pre;-webkit-text-stroke:0.15px #f0f0f5;">currencyservice::CurrencyService/GetSupportedCurrencies | 31.97µs</div>
<div style="position:absolute;left:1387px;top:853px;width:10px;height:10px;"></div>
<svg style="left:1384px;top:851px" width="14" height="14" viewBox="0 0 14 14" ><path d="M7 12.5 V3 M3 6.8 L7 2.8 L11 6.8" fill="none" stroke="#9a9aa8" stroke-width="1.8" stroke-linecap="round" stroke-linejoin="round"/></svg>
<div style="position:absolute;left:1455.5px;top:0px;width:1.5px;height:948px;background:#222329"></div>
</div>
</body></html>
